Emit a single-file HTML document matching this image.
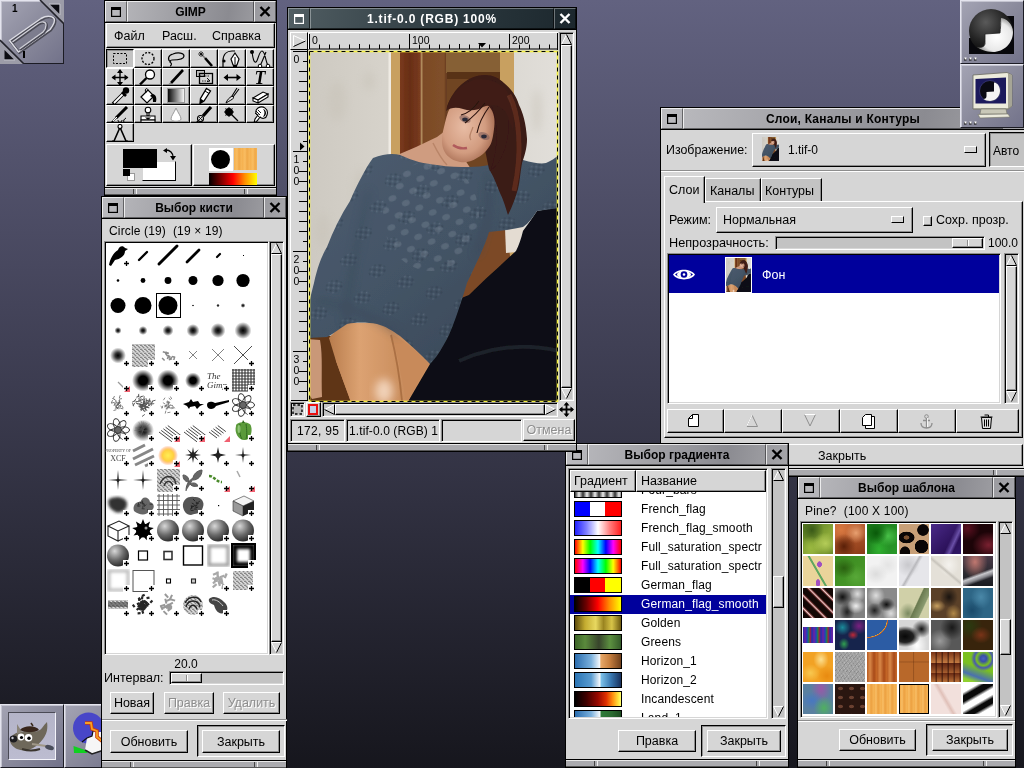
<!DOCTYPE html>
<html lang="ru"><head><meta charset="utf-8"><title>GIMP desktop</title>
<style>
*{box-sizing:border-box}
html,body{margin:0;padding:0}
body{width:1024px;height:768px;overflow:hidden;position:relative;background:linear-gradient(180deg,#626280 0%,#3c3c50 50%,#16161d 100%);font-family:"Liberation Sans",sans-serif;font-size:12px;color:#000;line-height:1}
.a{position:absolute}
.win{position:absolute;background:#000;overflow:hidden;will-change:transform}
.tb{position:absolute;left:1px;top:1px;right:1px;height:21px;background:linear-gradient(100deg,#bcbcc0 0%,#8b8b91 72%,#a6a6aa 100%)}
.tb.f{background:linear-gradient(100deg,#515e63 0%,#2a373d 60%,#1c272d 100%)}
.tb i{position:absolute;top:0;bottom:0;border-top:1px solid rgba(255,255,255,.75);border-left:1px solid rgba(255,255,255,.75);border-bottom:1px solid rgba(0,0,0,.45);border-right:1px solid rgba(0,0,0,.45)}
.tb.f i{border-top-color:rgba(255,255,255,.35);border-left-color:rgba(255,255,255,.35);border-bottom-color:rgba(0,0,0,.6);border-right-color:rgba(0,0,0,.6)}
.tb .l{left:0;width:22px}
.tb .m{left:22px;right:22px}
.tb .r{right:0;width:22px}
.tb b{position:absolute;left:22px;right:22px;top:5px;text-align:center;font-size:12px;font-weight:bold;letter-spacing:0;white-space:nowrap}
.tb.f b{color:#fff}
.tb svg{position:absolute;top:5px}
.ct{position:absolute;left:1px;right:1px;top:23px;background:#d6d6d6}
.rb{position:absolute;left:1px;right:1px;height:7px;background:#aaaaae;border-top:1px solid #e8e8e8;border-bottom:1px solid #555}
.rb:before,.rb:after{content:"";position:absolute;top:0;bottom:0;width:2px;border-left:1px solid #444;border-right:1px solid #eee}
.rb:before{left:28px}.rb:after{right:28px}
.btn{position:absolute;background:#d6d6d6;border:1px solid;border-color:#fff #000 #000 #fff;box-shadow:inset -1px -1px 0 #8e8e8e;text-align:center;white-space:nowrap}
.btn.dis{color:#8e8e8e;text-shadow:1px 1px 0 #fff}
.in{position:absolute;border:1px solid;border-color:#8e8e8e #fff #fff #8e8e8e;box-shadow:inset 1px 1px 0 #000,inset -1px -1px 0 #d6d6d6}
.sb{position:absolute;background:#c3c3c3;border:1px solid;border-color:#8e8e8e #fff #fff #8e8e8e;box-shadow:inset 1px 1px 0 #000,inset -1px -1px 0 #d6d6d6}
.t{position:absolute;white-space:nowrap}
.dock{will-change:transform;position:absolute;width:64px;height:64px;background:linear-gradient(135deg,#a4a4b4 0%,#8a8a9c 50%,#72728a 100%);border:1px solid;border-color:#e4e4ee #1c1c24 #1c1c24 #e4e4ee;box-shadow:inset 1px 1px 0 #c4c4d0}
</style></head><body>
<div class="dock" style="left:0;top:0">
<svg class="a" style="left:-1px;top:-1px" width="64" height="64" viewBox="0 0 64 64">
<path d="M40 0L64 0L64 24Z" fill="#9c9ca8"/><path d="M50 4.500L59.500 4.500L59.500 14Z" fill="#0c0c12"/><path d="M60 4V15M49 4H60" stroke="#d0d0d8" stroke-width="1" fill="none" opacity=".7"/>
<path d="M0 40L0 64L24 64Z" fill="#9c9ca8"/><path d="M4.500 50L4.500 59.500L14 59.500Z" fill="#0c0c12"/><path d="M4 60H15" stroke="#d0d0d8" stroke-width="1" opacity=".7"/>
<path d="M40 0L64 24" stroke="#22222a" stroke-width="1.600"/><path d="M0 40L24 64" stroke="#22222a" stroke-width="1.600"/>
<path d="M9.500 40.500L41 18.500C46 15.500 52 15.500 54 18.500C55.500 21 53 25.500 50 29.500L18.500 52Z" fill="#54545e" opacity=".22"/>
<g fill="none" stroke-linecap="round" stroke-linejoin="round">
<path d="M9.500 40.500L41 18.500C46 15.500 52 15.500 54 18.500C55.500 21 53 25.500 50 29.500L18.500 52L9.500 40.500" stroke="#4a4a55" stroke-width="2.600" transform="translate(.8,.8)"/>
<path d="M9.500 40.500L41 18.500C46 15.500 52 15.500 54 18.500C55.500 21 53 25.500 50 29.500L18.500 52L9.500 40.500" stroke="#dcdce4" stroke-width="1.500"/>
<path d="M13 41.500L38 23.500C42 21 46 21.500 46 25C46 28 45 30 43 32L20 48.500" stroke="#4a4a55" stroke-width="2.400" transform="translate(.8,.8)"/>
<path d="M13 41.500L38 23.500C42 21 46 21.500 46 25C46 28 45 30 43 32L20 48.500" stroke="#d0d0d8" stroke-width="1.300"/>
</g>
<text x="12" y="11.500" font-family="Liberation Sans, sans-serif" font-weight="bold" font-size="10" fill="#000">1</text>
<rect x="23" y="51" width="2" height="7" fill="#000"/>
</svg></div>
<div class="dock" style="left:960px;top:0;z-index:10">
<svg class="a" style="left:-1px;top:-1px" width="64" height="64" viewBox="0 0 64 64">
<defs><radialGradient id="gs1" cx="38%" cy="30%" r="70%"><stop offset="0" stop-color="#5a5a5a"/><stop offset=".6" stop-color="#262626"/><stop offset="1" stop-color="#0a0a0a"/></radialGradient>
<radialGradient id="gs2" cx="55%" cy="55%" r="60%"><stop offset="0" stop-color="#fff"/><stop offset=".7" stop-color="#e8e8e8"/><stop offset="1" stop-color="#8a8a8a"/></radialGradient></defs>
<rect x="36" y="16" width="18" height="38" fill="#08080c"/><rect x="9" y="38" width="45" height="16" fill="#08080c"/>
<circle cx="31" cy="31" r="22" fill="url(#gs1)"/>
<path d="M40.500 18C46 18 53 24 53 32C53 43 44 52 33 52C26 52 20 49 17 47C22 48 25 47 25 42L25 34L40 33Z" fill="url(#gs2)"/>
<path d="M40.500 18C41 24 40.500 28 40 33L25 34C25 38 25 42 25 44C24 47 21 48 17 47" fill="none" stroke="#222" stroke-width=".8"/>
<g><rect x="4" y="58" width="2.500" height="2.500" fill="#111"/><rect x="9" y="58" width="2.500" height="2.500" fill="#111"/><rect x="14" y="58" width="2.500" height="2.500" fill="#111"/><rect x="4.500" y="57.500" width="2" height="2" fill="#fff"/><rect x="9.500" y="57.500" width="2" height="2" fill="#fff"/><rect x="14.500" y="57.500" width="2" height="2" fill="#fff"/></g>
</svg></div>
<div class="dock" style="left:960px;top:64px;z-index:10">
<svg class="a" style="left:-1px;top:-1px" width="64" height="64" viewBox="0 0 64 64">
<path d="M13 11L47 8.500L52 11L52 42L48 45L13 45Z" fill="#ecebdc" stroke="#6a6a60" stroke-width=".8"/>
<path d="M48 9.500L52 11L52 42L48 45Z" fill="#a6a596"/>
<path d="M13 45L48 45L52 42" fill="none" stroke="#8a8a7c" stroke-width="1"/>
<path d="M15.500 15L46 13.500L46 39.500L15.500 39.500Z" fill="#1c1a5c"/>
<circle cx="30" cy="27" r="10.500" fill="#0a0a14" stroke="#3a3a7a" stroke-width=".8"/>
<path d="M34 18.500C38 19 40 23 40 27C40 33 35 37 30 37C27 37 25 36 23.500 35C25.500 35 26.500 34 26.500 32L26.500 28L34 27.500Z" fill="#f4f4f4"/>
<path d="M21 45L46 45L47 50L20 50Z" fill="#c9c8b8" stroke="#77776a" stroke-width=".6"/>
<path d="M18 50.500L48 50L50 53L20 54Z" fill="#ecebdc" stroke="#77776a" stroke-width=".6"/>
<g><rect x="4" y="58" width="2.500" height="2.500" fill="#111"/><rect x="9" y="58" width="2.500" height="2.500" fill="#111"/><rect x="14" y="58" width="2.500" height="2.500" fill="#111"/><rect x="4.500" y="57.500" width="2" height="2" fill="#fff"/><rect x="9.500" y="57.500" width="2" height="2" fill="#fff"/><rect x="14.500" y="57.500" width="2" height="2" fill="#fff"/></g>
</svg></div>
<div class="dock" style="left:0;top:704px">
<div class="a" style="left:7px;top:7px;width:48px;height:48px;background:linear-gradient(180deg,#b4b4c8,#bcbcd0);border:1px solid;border-color:#4a4a55 #f4f4fa #f4f4fa #4a4a55"></div>
<svg class="a" style="left:-1px;top:-1px" width="64" height="64" viewBox="0 0 64 64">
<defs><filter id="wb"><feGaussianBlur stdDeviation=".6"/></filter></defs>
<g filter="url(#wb)">
<path d="M13 31C17 27 24 27 30 28C35 28 40 27 42 24C44 21 46 19 47 18C48 24 47 30 43 35C40 39 37 42 33 44C28 47 22 47 17 45C13 43 10 40 10 36C10 34 11 32 13 31Z" fill="#6e685a"/>
<path d="M17 20L22 28L17 30Z" fill="#8a8478"/>
<path d="M20 26C24 21 36 21 39 26C34 29 25 29 20 26Z" fill="#38281a"/><path d="M31 19L33 22" stroke="#38281a" stroke-width="1.500"/>
<path d="M22 45C28 47 34 47 40 45" stroke="#3a362e" stroke-width="2" fill="none"/>
<ellipse cx="13.500" cy="35" rx="3.800" ry="3.400" fill="#1a1a1e"/><circle cx="12.500" cy="34" r="1.200" fill="#c8c8d0"/>
<circle cx="21" cy="33" r="3.400" fill="#fff"/><circle cx="28.500" cy="33.800" r="3.800" fill="#fff"/>
<circle cx="21.500" cy="33.500" r="1.600" fill="#000"/><circle cx="29" cy="34.200" r="1.700" fill="#000"/>
<path d="M32 40L46 42" stroke="#a09888" stroke-width="2"/><ellipse cx="49.500" cy="43.500" rx="4.500" ry="2.400" fill="#4a4e5a" transform="rotate(15 49.500 43.500)"/>
</g></svg></div>
<div class="dock" style="left:64px;top:704px">
<svg class="a" style="left:-1px;top:-1px" width="64" height="64" viewBox="0 0 64 64">
<circle cx="24.500" cy="24" r="15.500" fill="#4846c8"/>
<path d="M23 34L28 32L29 28L38 28L38 46L28 50L21 46Z" fill="#f6f6f6"/>
<path d="M18 38L23 34L28 32L29 27" stroke="#111" stroke-width="1.200" fill="none"/>
<path d="M21 19L27 19L28 25L33 27L33 33L38 37" fill="none" stroke="#c83a10" stroke-width="3.600"/>
<path d="M21 19L27 19L28 25L33 27L33 33L38 37" fill="none" stroke="#f8a020" stroke-width="1.800"/>
<path d="M9.500 42L24 47L23 49L10 49Z" fill="#10d020"/>
<path d="M21 46L28 50L37 47" stroke="#222" stroke-width="1.500" fill="none"/>
</svg></div>
<div class="win" style="left:104px;top:0px;width:173px;height:196px;z-index:0"><div class="tb"><i class="l"></i><i class="m"></i><i class="r"></i><svg style="left:6px;top:6px" width="10" height="10" viewBox="0 0 10 10"><rect x="0.600" y="0.600" width="8.800" height="8.800" fill="none" stroke="#000" stroke-width="1.200"/><rect x="0" y="0" width="10" height="3" fill="#000"/></svg><svg style="right:5px" width="12" height="11" viewBox="0 0 12 11"><path d="M1.5 1L10.5 10M10.5 1L1.5 10" stroke="#000" stroke-width="2.4"/></svg><b style="letter-spacing:0px">GIMP</b></div><div class="ct" style="height:164px"><div class="btn" style="left:1px;top:0px;width:169px;height:25px"></div><span class="t" style="left:9px;top:7px;font-size:12.5px;">Файл</span><span class="t" style="left:57px;top:7px;font-size:12.5px;">Расш.</span><span class="t" style="left:107px;top:7px;font-size:12.5px;">Справка</span><div class="btn" style="left:1px;top:26px;width:28px;height:19px;background:#c3c3c3;border-color:#000 #fff #fff #000;box-shadow:inset 1px 1px 0 #8e8e8e;overflow:hidden"><svg class="a" style="left:-1px;top:-1px" width="28" height="19" viewBox="0 0 28 19"><rect x="7.5" y="4.5" width="13" height="10" fill="none" stroke="#000" stroke-dasharray="2 1.5"/></svg></div><div class="btn" style="left:29px;top:26px;width:28px;height:19px;;overflow:hidden"><svg class="a" style="left:-1px;top:-1px" width="28" height="19" viewBox="0 0 28 19"><ellipse cx="14" cy="9.5" rx="6" ry="6" fill="none" stroke="#000" stroke-width="1.300" stroke-dasharray="2 1.5"/></svg></div><div class="btn" style="left:57px;top:26px;width:28px;height:19px;;overflow:hidden"><svg class="a" style="left:-1px;top:-1px" width="28" height="19" viewBox="0 0 28 19"><path d="M9 13C5 11 6 6 11 5C16 3 22 4 22 7C22 10 15 11 10 11C8 11 7 13 9 14C10 15 9 17 8 17" fill="none" stroke="#000" stroke-width="1.2"/></svg></div><div class="btn" style="left:85px;top:26px;width:28px;height:19px;;overflow:hidden"><svg class="a" style="left:-1px;top:-1px" width="28" height="19" viewBox="0 0 28 19"><path d="M15 9L22 17" stroke="#000" stroke-width="2.6"/><path d="M11 5L15 9" stroke="#777" stroke-width="1.6"/><path d="M8 5H14M11 2V8M9 3L13 7M13 3L9 7" stroke="#000" stroke-width=".7"/></svg></div><div class="btn" style="left:113px;top:26px;width:28px;height:19px;;overflow:hidden"><svg class="a" style="left:-1px;top:-1px" width="28" height="19" viewBox="0 0 28 19"><path d="M5 18V12C5 5 9 2 14 2H17" fill="none" stroke="#000" stroke-width="1.2"/><circle cx="6" cy="12" r="1.6"/><path d="M17 4L21 10L19 16H15L13 10Z" fill="#fff" stroke="#000" stroke-width="1.2"/><path d="M17 8V15" stroke="#000"/><rect x="15" y="16" width="4" height="3" fill="#000"/></svg></div><div class="btn" style="left:141px;top:26px;width:28px;height:19px;;overflow:hidden"><svg class="a" style="left:-1px;top:-1px" width="28" height="19" viewBox="0 0 28 19"><circle cx="6" cy="3" r="2"/><path d="M6 3C7 10 8 14 10 13C12 12 13 2 16 2C19 2 19 10 22 17M20 3C18 8 16 13 14 17" fill="none" stroke="#000" stroke-width="1.1"/><circle cx="14" cy="17" r="1.8" fill="#fff" stroke="#000"/><circle cx="22" cy="17" r="1.8" fill="#fff" stroke="#000"/></svg></div><div class="btn" style="left:1px;top:45px;width:28px;height:18px;;overflow:hidden"><svg class="a" style="left:-1px;top:-1px" width="28" height="19" viewBox="0 0 28 19"><path d="M14 2V17M6.5 9.5H21.5" stroke="#000" stroke-width="1.4"/><path d="M14 1L11 5H17ZM14 18L11 14H17ZM5.500 9.5L9.500 6.500V12.500ZM22.500 9.500L18.500 6.500V12.500Z" fill="#000"/></svg></div><div class="btn" style="left:29px;top:45px;width:28px;height:18px;;overflow:hidden"><svg class="a" style="left:-1px;top:-1px" width="28" height="19" viewBox="0 0 28 19"><circle cx="16" cy="6.500" r="4.500" fill="#fff" stroke="#000" stroke-width="1.300"/><path d="M12.500 10L6 16.500" stroke="#000" stroke-width="2.400"/></svg></div><div class="btn" style="left:57px;top:45px;width:28px;height:18px;;overflow:hidden"><svg class="a" style="left:-1px;top:-1px" width="28" height="19" viewBox="0 0 28 19"><path d="M21 2L9 15" stroke="#000" stroke-width="2.600"/><path d="M9 15L6 18" stroke="#888" stroke-width="2"/></svg></div><div class="btn" style="left:85px;top:45px;width:28px;height:18px;;overflow:hidden"><svg class="a" style="left:-1px;top:-1px" width="28" height="19" viewBox="0 0 28 19"><rect x="6.500" y="2.500" width="8" height="6" fill="#bbb" stroke="#000"/><rect x="9.500" y="5.500" width="13" height="10" fill="none" stroke="#000" stroke-width="1.300"/><path d="M10 8H20M12 13H19" stroke="#000" stroke-dasharray="1.500 1" stroke-width=".8"/><path d="M17 10L20 13L17 13.500" fill="none" stroke="#000" stroke-width=".9"/></svg></div><div class="btn" style="left:113px;top:45px;width:28px;height:18px;;overflow:hidden"><svg class="a" style="left:-1px;top:-1px" width="28" height="19" viewBox="0 0 28 19"><path d="M8 9.500H21" stroke="#000" stroke-width="1.600"/><path d="M5.500 9.500L10 6V13ZM23 9.500L18.500 6V13Z" fill="#000"/></svg></div><div class="btn" style="left:141px;top:45px;width:28px;height:18px;;overflow:hidden"><svg class="a" style="left:-1px;top:-1px" width="28" height="19" viewBox="0 0 28 19"><text x="14" y="16" text-anchor="middle" font-family="Liberation Serif, serif" font-weight="bold" font-style="italic" font-size="18" fill="#000">T</text></svg></div><div class="btn" style="left:1px;top:63px;width:28px;height:19px;;overflow:hidden"><svg class="a" style="left:-1px;top:-1px" width="28" height="19" viewBox="0 0 28 19"><circle cx="20" cy="4.500" r="3.200"/><path d="M16 6L20 10" stroke="#000" stroke-width="2.600"/><path d="M17 8L7 18" stroke="#000" stroke-width="3.800"/><path d="M16.500 8.500L8 17" stroke="#fff" stroke-width="1.800"/></svg></div><div class="btn" style="left:29px;top:63px;width:28px;height:19px;;overflow:hidden"><svg class="a" style="left:-1px;top:-1px" width="28" height="19" viewBox="0 0 28 19"><path d="M7 11L14 4L20 10L13 17Z" fill="#fff" stroke="#000" stroke-width="1.200"/><path d="M12 7C10 3 13 1 14 4" fill="none" stroke="#000" stroke-width="1"/><path d="M18 8C22 8 23 12 22 16L19 16C19 13 19 11 16 10Z" fill="#000"/></svg></div><div class="btn" style="left:57px;top:63px;width:28px;height:19px;;overflow:hidden"><svg class="a" style="left:-1px;top:-1px" width="28" height="19" viewBox="0 0 28 19"><defs><linearGradient id="tg" x1="0" x2="1"><stop offset="0" stop-color="#000"/><stop offset="1" stop-color="#fff"/></linearGradient></defs><rect x="5.500" y="2.500" width="17" height="14" fill="url(#tg)" stroke="#999" stroke-width="1"/></svg></div><div class="btn" style="left:85px;top:63px;width:28px;height:19px;;overflow:hidden"><svg class="a" style="left:-1px;top:-1px" width="28" height="19" viewBox="0 0 28 19"><path d="M16.500 2.500L20.500 5L14 15L10 17.500L10.500 12.500Z" fill="#fff" stroke="#000" stroke-width="1.300"/><path d="M10.500 12.500L10 17.500L14 15Z" fill="#000"/><path d="M15 5L19 7.500" stroke="#000" stroke-width="1"/></svg></div><div class="btn" style="left:113px;top:63px;width:28px;height:19px;;overflow:hidden"><svg class="a" style="left:-1px;top:-1px" width="28" height="19" viewBox="0 0 28 19"><path d="M19 2L14 10M21 3L15 11" stroke="#000" stroke-width="1.100"/><path d="M14 10L16 11.500C14 14 11 15 8 17C9 14 11 12 14 10Z" fill="#ddd" stroke="#000" stroke-width="1"/></svg></div><div class="btn" style="left:141px;top:63px;width:28px;height:19px;;overflow:hidden"><svg class="a" style="left:-1px;top:-1px" width="28" height="19" viewBox="0 0 28 19"><path d="M7 12L17 6L22 8L12 14Z" fill="#fff" stroke="#000" stroke-width="1.100"/><path d="M7 12V15L12 17V14ZM12 14V17L22 11V8Z" fill="#fff" stroke="#000" stroke-width="1.100"/></svg></div><div class="btn" style="left:1px;top:82px;width:28px;height:18px;;overflow:hidden"><svg class="a" style="left:-1px;top:-1px" width="28" height="19" viewBox="0 0 28 19"><path d="M21 2L10 13" stroke="#000" stroke-width="3"/><path d="M10 13L5 18" stroke="#000" stroke-width="1.400"/><path d="M11 12L7 16" stroke="#fff" stroke-width="1"/><path d="M12 15C12 18 16 18 16 15M20 13C18 14 17 16 18 17" fill="none" stroke="#000" stroke-width="1"/></svg></div><div class="btn" style="left:29px;top:82px;width:28px;height:18px;;overflow:hidden"><svg class="a" style="left:-1px;top:-1px" width="28" height="19" viewBox="0 0 28 19"><circle cx="14" cy="5" r="2.800" fill="#fff" stroke="#000" stroke-width="1.100"/><path d="M13 8V11H15V8" stroke="#000" fill="none"/><path d="M7 11H21V15H7Z" fill="#fff" stroke="#000" stroke-width="1.100"/><path d="M7 15H21V18H7Z" fill="#ddd" stroke="#000" stroke-width="1.100"/><path d="M11 12.500H17L14 15Z" fill="#000"/></svg></div><div class="btn" style="left:57px;top:82px;width:28px;height:18px;;overflow:hidden"><svg class="a" style="left:-1px;top:-1px" width="28" height="19" viewBox="0 0 28 19"><path d="M14 3C16 8 19 11 19 14C19 17 9 17 9 14C9 11 12 8 14 3Z" fill="#fff" stroke="#999" stroke-width="1"/></svg></div><div class="btn" style="left:85px;top:82px;width:28px;height:18px;;overflow:hidden"><svg class="a" style="left:-1px;top:-1px" width="28" height="19" viewBox="0 0 28 19"><path d="M21 2L13 11" stroke="#000" stroke-width="3.200"/><circle cx="10.500" cy="13.500" r="3" fill="#ddd" stroke="#000" stroke-width="1.100"/><path d="M8.500 11.500L12.500 15.500M12.500 11.500L8.500 15.500" stroke="#000" stroke-width=".8"/><path d="M8 16L6 18" stroke="#000" stroke-width="1.200"/></svg></div><div class="btn" style="left:113px;top:82px;width:28px;height:18px;;overflow:hidden"><svg class="a" style="left:-1px;top:-1px" width="28" height="19" viewBox="0 0 28 19"><circle cx="11" cy="7" r="4" fill="#000"/><path d="M11 7L20 16" stroke="#000" stroke-width="1.300"/><path d="M6 7H16M11 2V12M7.500 3.500L14.500 10.500M14.500 3.500L7.500 10.500" stroke="#000" stroke-width="1"/></svg></div><div class="btn" style="left:141px;top:82px;width:28px;height:18px;;overflow:hidden"><svg class="a" style="left:-1px;top:-1px" width="28" height="19" viewBox="0 0 28 19"><path d="M12 3C17 0 23 4 21 10C20 14 16 14 14 12L11 16L8 18L9 14L12 10C9 9 9 5 12 3Z" fill="#fff" stroke="#000" stroke-width="1.100"/><path d="M17 4C21 5 21 11 17 12C19 9 19 6 17 4Z" fill="#000"/><path d="M9 8L13 12M10 6L14 10M12 5L15 8" stroke="#000" stroke-width=".9"/></svg></div><div class="btn" style="left:1px;top:100px;width:28px;height:19px;;overflow:hidden"><svg class="a" style="left:-1px;top:-1px" width="28" height="19" viewBox="0 0 28 19"><circle cx="14" cy="3.500" r="2" fill="#fff" stroke="#000" stroke-width="1.100"/><path d="M13.500 5.500L8 18M14.500 5.500L20 18" stroke="#000" stroke-width="1.600"/><path d="M8 18H6M20 18H22" stroke="#000"/></svg></div><div class="btn" style="left:1px;top:121px;width:86px;height:42px"></div><div class="btn" style="left:88px;top:121px;width:82px;height:42px"></div><div class="a" style="left:37px;top:138px;width:34px;height:20px;background:#fff;border:1px solid;border-color:#d6d6d6 #000 #000 #d6d6d6"></div><div class="a" style="left:18px;top:126px;width:34px;height:19px;background:#000"></div><div class="a" style="left:22px;top:150px;width:8px;height:8px;background:#fff;border:1px solid #999"></div><div class="a" style="left:18px;top:146px;width:7px;height:7px;background:#000"></div><svg class="a" style="left:58px;top:125px" width="14" height="13" viewBox="0 0 14 13"><path d="M3 2C7 2 10 5 10 9" fill="none" stroke="#000" stroke-width="1.300"/><path d="M0 2.500L4 0V5ZM10 12.500L7 8H13Z" fill="#000"/></svg><div class="a" style="left:104px;top:125px;width:24px;height:23px;background:#fff"></div><div class="a" style="left:106px;top:127px;width:19px;height:19px;border-radius:50%;background:#000"></div><div class="a" style="left:129px;top:125px;width:23px;height:22px;background:repeating-linear-gradient(90deg,#f5b04e 0,#f9bd62 3px,#efa848 5px,#f7b85a 8px)"></div><div class="a" style="left:104px;top:150px;width:48px;height:12px;background:linear-gradient(90deg,#000 0%,#7a0000 25%,#ff0000 50%,#ff9000 75%,#ffff00 100%)"></div></div><div class="rb" style="top:188px"></div></div>
<div class="win" style="left:101px;top:196px;width:186px;height:574px;z-index:0"><div class="tb"><i class="l"></i><i class="m"></i><i class="r"></i><svg style="left:6px;top:6px" width="10" height="10" viewBox="0 0 10 10"><rect x="0.600" y="0.600" width="8.800" height="8.800" fill="none" stroke="#000" stroke-width="1.200"/><rect x="0" y="0" width="10" height="3" fill="#000"/></svg><svg style="right:5px" width="12" height="11" viewBox="0 0 12 11"><path d="M1.5 1L10.5 10M10.5 1L1.5 10" stroke="#000" stroke-width="2.4"/></svg><b style="letter-spacing:0px">Выбор кисти</b></div><div class="ct" style="height:541px"><span class="t" style="left:7px;top:6px;font-size:12px;letter-spacing:.15px">Circle (19)&nbsp; (19 × 19)</span><div class="in" style="left:2px;top:22px;width:165px;height:414px;background:#fff;overflow:hidden"><svg class="a" style="left:0px;top:-1px" width="161" height="411" viewBox="0 0 161 411"><defs>
<radialGradient id="fz"><stop offset="0" stop-color="#000"/><stop offset=".35" stop-color="#000" stop-opacity=".8"/><stop offset="1" stop-color="#000" stop-opacity="0"/></radialGradient>
<radialGradient id="fzh"><stop offset="0" stop-color="#000"/><stop offset=".4" stop-color="#000"/><stop offset="1" stop-color="#000" stop-opacity="0"/></radialGradient>
<radialGradient id="sun"><stop offset="0" stop-color="#ffee55"/><stop offset=".55" stop-color="#ffd040"/><stop offset="1" stop-color="#ff7030" stop-opacity="0"/></radialGradient>
<radialGradient id="sph" cx="35%" cy="30%" r="75%"><stop offset="0" stop-color="#d8d8d8"/><stop offset=".55" stop-color="#6a6a6a"/><stop offset="1" stop-color="#262626"/></radialGradient>
<filter id="b1"><feGaussianBlur stdDeviation="0.7"/></filter>
<filter id="b2"><feGaussianBlur stdDeviation="1.6"/></filter>
<pattern id="nz" width="4" height="4" patternUnits="userSpaceOnUse"><rect width="4" height="4" fill="#bcbcbc"/><path d="M0 0L2 2M3 1L4 0M1 4L3 2" stroke="#7a7a7a" stroke-width=".8"/><path d="M2 0L4 2M0 2L2 4" stroke="#eee" stroke-width=".7"/></pattern>
</defs><path d="M4 24C5 18 8 12 13 9C14 5 18 4 20 7L23 8L20 10C20 15 15 18 10 19L6 25Z" fill="#000"/><rect x="18" y="19" width="8" height="8" fill="#fff"/><path d="M19 22.5H24M21.5 20V25" stroke="#000" stroke-width="1.3"/><path d="M34 19L42 11" stroke="#000" stroke-width="2.4" stroke-linecap="round"/><path d="M54 23L72 5" stroke="#000" stroke-width="3" stroke-linecap="round"/><path d="M82 21L94 9" stroke="#000" stroke-width="2.8" stroke-linecap="round"/><path d="M112 16L115 13" stroke="#000" stroke-width="2.2" stroke-linecap="round"/><rect x="138" y="14" width="1" height="1" fill="#000"/><circle cx="13" cy="39.5" r="1.3" fill="#000"/><circle cx="38" cy="39.5" r="2.4" fill="#000"/><circle cx="63" cy="39.5" r="3.4" fill="#000"/><circle cx="88" cy="39.5" r="4.5" fill="#000"/><circle cx="113" cy="39.5" r="5.6" fill="#000"/><circle cx="138" cy="39.5" r="6.6" fill="#000"/><circle cx="13" cy="64.5" r="7.5" fill="#000"/><circle cx="38" cy="64.5" r="8.5" fill="#000"/><circle cx="63" cy="64.5" r="9.5" fill="#000"/><rect x="51.5" y="52.5" width="24" height="24" fill="none" stroke="#000" stroke-width="1"/><circle cx="88" cy="64.5" r="1.2" fill="url(#fz)"/><circle cx="113" cy="64.5" r="1.8" fill="url(#fz)"/><circle cx="138" cy="64.5" r="2.4" fill="url(#fz)"/><circle cx="13" cy="89.5" r="3.5" fill="url(#fz)"/><circle cx="38" cy="89.5" r="4.5" fill="url(#fz)"/><circle cx="63" cy="89.5" r="5.5" fill="url(#fz)"/><circle cx="88" cy="89.5" r="6.5" fill="url(#fz)"/><circle cx="113" cy="89.5" r="7.5" fill="url(#fz)"/><circle cx="138" cy="89.5" r="8.5" fill="url(#fz)"/><circle cx="13" cy="114.5" r="8" fill="url(#fz)"/><rect x="18" y="119" width="8" height="8" fill="#fff"/><path d="M19 122.5H24M21.5 120V125" stroke="#000" stroke-width="1.3"/><rect x="27" y="103" width="23" height="23" fill="url(#nz)"/><rect x="43" y="119" width="8" height="8" fill="#fff"/><path d="M44 122.5H49M46.5 120V125" stroke="#000" stroke-width="1.3"/><g stroke="#777" stroke-width="1.5" fill="none" opacity=".85"><path d="M62.5 115.1l-2.0 -2.8"/><path d="M66.9 115.9l-2.3 2.6"/><path d="M66.8 115.4l3.4 0.8"/><path d="M62.5 114.2l2.9 1.9"/><path d="M57.1 117.0l2.5 2.5"/><path d="M63.8 118.9l3.3 -1.1"/><path d="M60.2 112.5l3.5 -0.5"/><path d="M69.6 116.0l-0.9 3.4"/><path d="M63.6 114.7l-1.3 3.3"/><path d="M63.6 112.7l-3.1 -1.7"/><path d="M61.1 111.7l-3.3 -1.0"/><path d="M63.4 114.2l1.0 3.4"/></g><rect x="68" y="119" width="8" height="8" fill="#fff"/><path d="M69 122.5H74M71.5 120V125" stroke="#000" stroke-width="1.3"/><path d="M84 110L92 118M92 110L84 118" stroke="#222" stroke-width="0.7" opacity=".8"/><path d="M107 108L119 120M119 108L107 120" stroke="#222" stroke-width="0.7" opacity=".8"/><path d="M129 105L147 123M147 105L129 123" stroke="#222" stroke-width="1" opacity=".8"/><rect x="143" y="119" width="8" height="8" fill="#fff"/><path d="M144 122.5H149M146.5 120V125" stroke="#000" stroke-width="1.3"/><path d="M13 141L19 147" stroke="#999" stroke-width="1.2"/><rect x="18" y="144" width="8" height="8" fill="#fff"/><path d="M25 145V151H19Z" fill="#f06070"/><path d="M19 147.5H24M21.5 145V150" stroke="#000" stroke-width="1.3"/><circle cx="38" cy="139.5" r="11" fill="url(#fzh)"/><rect x="43" y="144" width="8" height="8" fill="#fff"/><path d="M44 147.5H49M46.5 145V150" stroke="#000" stroke-width="1.3"/><circle cx="63" cy="139.5" r="11" fill="url(#fzh)"/><rect x="68" y="144" width="8" height="8" fill="#fff"/><path d="M69 147.5H74M71.5 145V150" stroke="#000" stroke-width="1.3"/><circle cx="88" cy="139.5" r="8" fill="url(#fzh)"/><rect x="93" y="144" width="8" height="8" fill="#fff"/><path d="M94 147.5H99M96.5 145V150" stroke="#000" stroke-width="1.3"/><text x="102" y="138" font-family="Liberation Serif, serif" font-style="italic" font-size="9" fill="#333">The</text><text x="102" y="147" font-family="Liberation Serif, serif" font-style="italic" font-size="9" fill="#333">Gimp</text><rect x="118" y="144" width="8" height="8" fill="#fff"/><path d="M119 147.5H124M121.5 145V150" stroke="#000" stroke-width="1.3"/><g stroke="#333" stroke-width="1.1"><path d="M128 128V150M127 129H150"/><path d="M131 128V150M127 132H150"/><path d="M134 128V150M127 135H150"/><path d="M137 128V150M127 138H150"/><path d="M140 128V150M127 141H150"/><path d="M143 128V150M127 144H150"/><path d="M146 128V150M127 147H150"/><path d="M149 128V150M127 150H150"/></g><rect x="143" y="144" width="8" height="8" fill="#fff"/><path d="M144 147.5H149M146.5 145V150" stroke="#000" stroke-width="1.3"/><g stroke="#444" stroke-width="0.8" fill="none" opacity=".85"><path d="M11.5 160.9l-1.2 2.8"/><path d="M9.9 162.1l-0.9 2.9"/><path d="M14.5 158.6l0.1 3.0"/><path d="M9.2 162.1l2.1 -2.1"/><path d="M12.7 161.7l3.0 -0.4"/><path d="M15.5 166.3l0.1 -3.0"/><path d="M15.3 167.2l2.9 0.7"/><path d="M10.0 158.7l-2.7 -1.3"/><path d="M14.8 162.2l-1.0 -2.8"/><path d="M9.1 161.4l-2.9 0.8"/><path d="M17.0 157.6l-3.0 0.5"/><path d="M12.7 163.6l-0.9 -2.9"/><path d="M8.2 157.7l1.3 -2.7"/><path d="M12.3 167.0l-1.5 -2.6"/><path d="M16.7 164.5l1.5 2.6"/><path d="M13.3 164.3l0.3 -3.0"/><path d="M14.4 165.4l-2.3 1.9"/><path d="M13.4 163.5l-2.8 0.9"/><path d="M6.3 161.9l1.3 -2.7"/><path d="M14.5 162.3l-2.6 1.5"/><path d="M8.5 169.5l2.9 -0.8"/><path d="M13.8 165.1l0.3 3.0"/><path d="M13.4 167.9l-2.5 -1.6"/><path d="M13.0 164.0l-2.6 1.5"/><path d="M9.9 167.3l2.9 -0.9"/><path d="M11.5 160.2l-2.2 -2.0"/><path d="M12.8 163.6l2.4 -1.8"/><path d="M14.3 157.1l0.9 -2.9"/><path d="M10.5 166.0l2.4 1.8"/><path d="M12.7 163.6l2.7 1.2"/></g><rect x="18" y="169" width="8" height="8" fill="#fff"/><path d="M19 172.5H24M21.5 170V175" stroke="#000" stroke-width="1.3"/><g stroke="#333" stroke-width="0.9" fill="none" opacity=".85"><path d="M38.4 165.6l-1.9 3.0"/><path d="M38.0 164.0l2.0 2.8"/><path d="M40.9 166.2l3.5 0.6"/><path d="M42.3 159.6l2.1 2.8"/><path d="M38.0 167.5l-2.3 2.6"/><path d="M44.1 169.9l3.5 -0.2"/><path d="M33.3 165.0l3.0 1.8"/><path d="M40.7 166.1l-0.3 3.5"/><path d="M38.8 162.6l3.5 0.5"/><path d="M43.0 162.4l2.1 2.8"/><path d="M37.7 163.9l-3.4 -0.6"/><path d="M46.6 162.8l-1.2 -3.3"/><path d="M37.7 167.7l1.7 3.0"/><path d="M38.7 158.7l0.6 -3.4"/><path d="M36.9 166.0l1.3 -3.2"/><path d="M46.5 163.2l1.2 -3.3"/><path d="M41.1 157.3l0.5 3.5"/><path d="M34.5 163.6l3.4 0.6"/><path d="M40.8 164.5l-0.2 3.5"/><path d="M34.6 155.1l-3.3 1.1"/><path d="M47.1 160.2l3.4 -1.0"/><path d="M36.5 165.7l0.5 3.5"/><path d="M38.7 165.9l-2.5 -2.5"/><path d="M44.8 159.1l-3.5 0.5"/><path d="M33.4 157.5l3.0 1.8"/><path d="M33.1 156.3l0.7 -3.4"/><path d="M38.0 159.2l1.5 3.2"/><path d="M38.8 160.8l1.1 -3.3"/><path d="M41.9 163.3l-2.8 2.0"/><path d="M44.8 161.6l1.7 3.1"/><path d="M39.1 165.1l2.9 -2.0"/><path d="M38.5 162.6l1.6 -3.1"/><path d="M44.5 163.2l-2.1 2.8"/><path d="M36.8 163.6l3.5 0.3"/><path d="M44.4 162.8l-3.5 -0.6"/><path d="M42.0 162.2l2.4 -2.5"/><path d="M39.0 162.1l-0.0 3.5"/><path d="M37.4 166.3l-3.0 -1.8"/><path d="M37.8 168.2l2.4 2.6"/><path d="M41.0 162.1l-3.4 0.9"/><path d="M30.2 159.5l-3.1 1.7"/><path d="M42.4 161.5l-3.4 -0.7"/><path d="M37.8 164.0l-3.3 1.3"/><path d="M38.0 164.0l1.1 -3.3"/><path d="M40.2 168.2l-0.6 -3.5"/><path d="M34.9 162.9l-3.5 -0.4"/><path d="M30.6 161.3l2.8 2.2"/><path d="M35.7 163.1l-0.6 3.5"/><path d="M38.7 159.0l-3.2 -1.3"/><path d="M38.6 154.9l-3.3 1.2"/><path d="M34.1 160.7l-3.5 -0.3"/><path d="M36.4 159.8l-3.4 -0.7"/><path d="M28.7 165.3l-1.1 -3.3"/><path d="M44.7 157.4l-0.2 3.5"/><path d="M29.2 160.6l1.9 -3.0"/><path d="M38.8 164.9l-3.3 1.2"/><path d="M40.2 165.1l3.1 1.6"/><path d="M34.2 157.2l2.8 -2.1"/><path d="M42.0 169.9l-1.9 -3.0"/><path d="M43.5 170.9l3.4 -0.7"/><path d="M39.8 173.4l-2.8 2.1"/><path d="M28.1 164.8l1.7 -3.0"/><path d="M40.3 167.7l-3.5 -0.3"/><path d="M37.0 165.7l-1.5 3.2"/><path d="M38.0 163.8l-3.3 -1.2"/><path d="M37.8 164.1l-1.7 3.1"/><path d="M34.3 160.4l3.2 1.4"/><path d="M45.8 163.2l3.4 -0.6"/><path d="M40.1 165.6l3.4 0.9"/><path d="M38.5 161.3l2.4 2.5"/></g><rect x="43" y="169" width="8" height="8" fill="#fff"/><path d="M44 172.5H49M46.5 170V175" stroke="#000" stroke-width="1.3"/><g stroke="#555" stroke-width="0.8" fill="none" opacity=".85"><path d="M56.6 167.4l1.3 -2.7"/><path d="M62.9 165.2l2.6 -1.5"/><path d="M57.9 161.6l2.5 1.6"/><path d="M68.2 165.9l-2.7 1.4"/><path d="M69.7 167.3l-2.0 -2.2"/><path d="M63.2 163.4l1.9 -2.4"/><path d="M69.3 166.8l-2.9 0.9"/><path d="M60.7 167.8l2.7 -1.3"/><path d="M62.9 165.0l-3.0 -0.5"/><path d="M63.1 164.9l1.6 2.5"/><path d="M64.5 164.5l-1.1 2.8"/><path d="M60.9 169.7l-0.7 2.9"/><path d="M61.6 164.0l-1.7 2.5"/><path d="M65.0 164.2l3.0 0.3"/><path d="M62.5 159.6l1.1 2.8"/><path d="M55.6 165.2l2.4 1.9"/><path d="M64.4 160.9l-3.0 0.1"/><path d="M64.6 161.3l-3.0 -0.1"/><path d="M60.0 156.7l-1.6 2.5"/><path d="M65.8 159.1l-2.0 -2.3"/><path d="M60.7 165.6l2.8 1.0"/><path d="M63.4 164.4l-0.2 -3.0"/><path d="M63.0 165.3l2.6 1.5"/><path d="M66.8 158.1l-1.4 -2.6"/><path d="M62.6 165.9l-0.8 2.9"/><path d="M61.8 164.3l-2.8 1.0"/><path d="M62.4 171.7l3.0 -0.5"/><path d="M61.1 163.4l2.9 -0.7"/></g><rect x="68" y="169" width="8" height="8" fill="#fff"/><path d="M69 172.5H74M71.5 170V175" stroke="#000" stroke-width="1.3"/><path d="M78 163L84 161L86 158L88 161L93 160L95 163L99 163L95 165L92 168L90 165L85 166L84 168L82 165Z" fill="#000"/><rect x="93" y="169" width="8" height="8" fill="#fff"/><path d="M94 172.5H99M96.5 170V175" stroke="#000" stroke-width="1.3"/><path d="M102 164C102 160 107 160 110 162L124 159L124 161L111 165C109 169 102 169 102 164Z" fill="#000"/><rect x="118" y="169" width="8" height="8" fill="#fff"/><path d="M119 172.5H124M121.5 170V175" stroke="#000" stroke-width="1.3"/><g fill="none" stroke="#333" stroke-width="1"><ellipse cx="144.0" cy="164.0" rx="5.5" ry="3.2" transform="rotate(0 144.0 164.0)"/><ellipse cx="141.7" cy="168.7" rx="5.5" ry="3.2" transform="rotate(51 141.7 168.7)"/><ellipse cx="136.7" cy="169.8" rx="5.5" ry="3.2" transform="rotate(103 136.7 169.8)"/><ellipse cx="132.6" cy="166.6" rx="5.5" ry="3.2" transform="rotate(154 132.6 166.6)"/><ellipse cx="132.6" cy="161.4" rx="5.5" ry="3.2" transform="rotate(206 132.6 161.4)"/><ellipse cx="136.7" cy="158.2" rx="5.5" ry="3.2" transform="rotate(257 136.7 158.2)"/><ellipse cx="141.7" cy="159.3" rx="5.5" ry="3.2" transform="rotate(309 141.7 159.3)"/><circle cx="138" cy="164" r="3.5" fill="#666"/></g><rect x="143" y="169" width="8" height="8" fill="#fff"/><path d="M144 172.5H149M146.5 170V175" stroke="#000" stroke-width="1.3"/><g fill="none" stroke="#333" stroke-width="1"><ellipse cx="19.0" cy="189.0" rx="5.5" ry="3.2" transform="rotate(0 19.0 189.0)"/><ellipse cx="16.7" cy="193.7" rx="5.5" ry="3.2" transform="rotate(51 16.7 193.7)"/><ellipse cx="11.7" cy="194.8" rx="5.5" ry="3.2" transform="rotate(103 11.7 194.8)"/><ellipse cx="7.6" cy="191.6" rx="5.5" ry="3.2" transform="rotate(154 7.6 191.6)"/><ellipse cx="7.6" cy="186.4" rx="5.5" ry="3.2" transform="rotate(206 7.6 186.4)"/><ellipse cx="11.7" cy="183.2" rx="5.5" ry="3.2" transform="rotate(257 11.7 183.2)"/><ellipse cx="16.7" cy="184.3" rx="5.5" ry="3.2" transform="rotate(309 16.7 184.3)"/><circle cx="13" cy="189" r="3.5" fill="#666"/></g><rect x="18" y="194" width="8" height="8" fill="#fff"/><path d="M19 197.5H24M21.5 195V200" stroke="#000" stroke-width="1.3"/><circle cx="38" cy="189.5" r="11" fill="url(#fz)"/><g stroke="#666" stroke-width="0.4" fill="none" opacity=".85"><path d="M37.7 189.7l8.0 0.1"/><path d="M37.3 189.6l-8.0 -0.1"/><path d="M38.3 190.0l8.0 0.2"/><path d="M38.0 189.2l-6.5 4.7"/><path d="M38.0 189.0l-2.7 7.5"/><path d="M38.1 190.2l-7.9 -1.4"/><path d="M38.0 187.7l-1.7 -7.8"/><path d="M38.6 188.5l-3.7 7.1"/><path d="M38.3 189.0l-1.3 -7.9"/><path d="M37.9 188.9l4.1 -6.9"/><path d="M39.0 188.2l-0.8 -8.0"/><path d="M38.1 188.7l-7.9 -1.2"/><path d="M36.3 189.0l2.7 -7.5"/><path d="M38.5 188.0l6.2 -5.0"/><path d="M37.4 187.7l1.0 7.9"/><path d="M38.3 189.1l-5.1 6.1"/><path d="M39.3 190.0l-7.5 -2.9"/><path d="M37.1 188.1l-3.4 -7.2"/><path d="M38.0 189.0l2.3 -7.6"/><path d="M38.0 188.0l-7.8 -1.7"/></g><rect x="43" y="194" width="8" height="8" fill="#fff"/><path d="M44 197.5H49M46.5 195V200" stroke="#000" stroke-width="1.3"/><g stroke="#333" stroke-width=".9"><path d="M54.0 191.0l13 9.8"/><path d="M56.2 189.4l13 9.8"/><path d="M58.4 187.8l13 9.8"/><path d="M60.6 186.2l13 9.8"/><path d="M62.8 184.6l13 9.8"/></g><rect x="68" y="194" width="8" height="8" fill="#fff"/><path d="M75 195V201H69Z" fill="#f06070"/><path d="M69 197.5H74M71.5 195V200" stroke="#000" stroke-width="1.3"/><g stroke="#333" stroke-width=".9"><path d="M79.0 191.0l13 9.8"/><path d="M81.2 189.4l13 9.8"/><path d="M83.4 187.8l13 9.8"/><path d="M85.6 186.2l13 9.8"/><path d="M87.8 184.6l13 9.8"/></g><rect x="93" y="194" width="8" height="8" fill="#fff"/><path d="M100 195V201H94Z" fill="#f06070"/><path d="M94 197.5H99M96.5 195V200" stroke="#000" stroke-width="1.3"/><g stroke="#333" stroke-width=".9"><path d="M104.0 191.0l8 6.0"/><path d="M106.2 189.4l8 6.0"/><path d="M108.4 187.8l8 6.0"/><path d="M110.6 186.2l8 6.0"/><path d="M112.8 184.6l8 6.0"/></g><path d="M125 195V201H119Z" fill="#f06070"/><path d="M131 185C131 180 145 180 146 185C148 191 145 199 140 199C134 200 129 192 131 185Z" fill="#5a9a3a"/><path d="M135 183C134 189 135 195 137 198M141 183C142 189 142 195 141 198" stroke="#2f6a1f" fill="none"/><path d="M137 182L138 179L140 182Z" fill="#2f6a1f"/><ellipse cx="134" cy="188" rx="1.5" ry="4" fill="#a8d890" opacity=".7"/><rect x="143" y="194" width="8" height="8" fill="#fff"/><path d="M144 197.5H149M146.5 195V200" stroke="#000" stroke-width="1.3"/><text x="13" y="211" text-anchor="middle" font-family="Liberation Serif, serif" font-size="4" fill="#444">PROPERTY OF</text><text x="13" y="220" text-anchor="middle" font-family="Liberation Serif, serif" font-size="8" fill="#444">XCF</text><rect x="18" y="219" width="8" height="8" fill="#fff"/><path d="M19 222.5H24M21.5 220V225" stroke="#000" stroke-width="1.3"/><g stroke="#555" stroke-width="3" opacity=".7" filter="url(#b1)"><path d="M28 210L40 204M28 218L48 208M30 224L49 215M40 225L49 221"/></g><rect x="43" y="219" width="8" height="8" fill="#fff"/><path d="M44 222.5H49M46.5 220V225" stroke="#000" stroke-width="1.3"/><circle cx="63" cy="214.5" r="10" fill="url(#sun)"/><rect x="68" y="219" width="8" height="8" fill="#fff"/><path d="M75 220V226H69Z" fill="#f06070"/><path d="M69 222.5H74M71.5 220V225" stroke="#000" stroke-width="1.3"/><polygon points="88.0,206.0 89.0,211.7 93.7,208.3 90.3,213.0 96.0,214.0 90.3,215.0 93.7,219.7 89.0,216.3 88.0,222.0 87.0,216.3 82.3,219.7 85.7,215.0 80.0,214.0 85.7,213.0 82.3,208.3 87.0,211.7" fill="#222"/><rect x="93" y="219" width="8" height="8" fill="#fff"/><path d="M94 222.5H99M96.5 220V225" stroke="#000" stroke-width="1.3"/><polygon points="113.0,206.0 114.4,212.6 121.0,214.0 114.4,215.4 113.0,222.0 111.6,215.4 105.0,214.0 111.6,212.6" fill="#222"/><circle cx="113" cy="214.5" r="2.5" fill="#222"/><rect x="118" y="219" width="8" height="8" fill="#fff"/><path d="M119 222.5H124M121.5 220V225" stroke="#000" stroke-width="1.3"/><polygon points="138.0,206.0 138.8,213.2 146.0,214.0 138.8,214.8 138.0,222.0 137.2,214.8 130.0,214.0 137.2,213.2" fill="#222"/><circle cx="138" cy="214.5" r="1.5" fill="#222"/><rect x="143" y="219" width="8" height="8" fill="#fff"/><path d="M144 222.5H149M146.5 220V225" stroke="#000" stroke-width="1.3"/><polygon points="13.0,229.0 13.8,238.2 23.0,239.0 13.8,239.8 13.0,249.0 12.2,239.8 3.0,239.0 12.2,238.2" fill="#222"/><circle cx="13" cy="239.5" r="1.4" fill="#222"/><polygon points="38.0,229.0 38.8,238.2 48.0,239.0 38.8,239.8 38.0,249.0 37.2,239.8 28.0,239.0 37.2,238.2" fill="#222"/><circle cx="38" cy="239.5" r="1.4" fill="#222"/><rect x="52" y="228" width="23" height="23" fill="url(#nz)"/><path d="M55 243C59 233 69 233 71 243M59 245C61 239 66 239 68 245" stroke="#333" fill="none" stroke-width="1.5"/><rect x="68" y="244" width="8" height="8" fill="#fff"/><path d="M69 247.5H74M71.5 245V250" stroke="#000" stroke-width="1.3"/><path d="M81 250C81 242 85 239 88 237C89 231 95 229 97 229C97 235 93 239 88 239M78 234C82 234 84 237 84 241C80 241 78 238 78 234M85 243C88 241 92 242 93 245C89 246 86 245 85 243Z" fill="#666" stroke="#555"/><rect x="93" y="244" width="8" height="8" fill="#fff"/><path d="M94 247.5H99M96.5 245V250" stroke="#000" stroke-width="1.3"/><path d="M104 235C109 235 111 241 117 241" stroke="#4a8a2a" stroke-width="2.5" fill="none" stroke-dasharray="3 1.5"/><rect x="118" y="244" width="8" height="8" fill="#fff"/><path d="M125 245V251H119Z" fill="#f06070"/><path d="M119 247.5H124M121.5 245V250" stroke="#000" stroke-width="1.3"/><path d="M132 230L135 236" stroke="#aaa" stroke-width="1.5"/><rect x="143" y="244" width="8" height="8" fill="#fff"/><path d="M150 245V251H144Z" fill="#f06070"/><path d="M144 247.5H149M146.5 245V250" stroke="#000" stroke-width="1.3"/><path d="M4 258C11 254 21 256 22 262C23 270 13 274 9 270C4 268 2 262 4 258Z" fill="#333" filter="url(#b2)"/><rect x="18" y="269" width="8" height="8" fill="#fff"/><path d="M19 272.5H24M21.5 270V275" stroke="#000" stroke-width="1.3"/><path d="M29 270C27 264 32 260 36 261C36 255 44 255 45 261C50 262 50 269 45 270C41 275 34 274 29 270Z" fill="#666" filter="url(#b1)"/><g stroke="#222" stroke-width="0.8" fill="none" opacity=".85"><path d="M37.7 263.6l-0.3 -3.0"/><path d="M38.0 264.5l-0.3 3.0"/><path d="M37.8 262.6l-0.2 -3.0"/><path d="M41.4 263.5l-2.2 2.0"/><path d="M33.3 264.6l0.3 -3.0"/><path d="M34.7 261.0l2.7 1.4"/><path d="M39.1 265.4l-0.1 -3.0"/><path d="M36.7 267.7l3.0 0.2"/><path d="M39.7 264.7l-1.4 -2.6"/><path d="M36.3 259.6l-0.8 2.9"/><path d="M34.8 263.7l-2.9 0.6"/><path d="M42.6 268.2l0.9 2.8"/><path d="M44.5 263.1l3.0 0.3"/><path d="M32.5 265.5l2.9 -0.6"/></g><rect x="43" y="269" width="8" height="8" fill="#fff"/><path d="M44 272.5H49M46.5 270V275" stroke="#000" stroke-width="1.3"/><g stroke="#555" stroke-width=".9"><path d="M54.0 253V275M52 255.0H75"/><path d="M58.5 253V275M52 259.5H75"/><path d="M63.0 253V275M52 264.0H75"/><path d="M67.5 253V275M52 268.5H75"/><path d="M72.0 253V275M52 273.0H75"/></g><rect x="68" y="269" width="8" height="8" fill="#fff"/><path d="M69 272.5H74M71.5 270V275" stroke="#000" stroke-width="1.3"/><path d="M78 266C77 258 84 255 89 256C96 255 100 261 98 266C96 274 90 272 86 274C81 274 79 270 78 266Z" fill="#555" filter="url(#b1)"/><g stroke="#111" stroke-width="0.8" fill="none" opacity=".85"><path d="M86.2 264.6l0.8 2.9"/><path d="M89.4 263.5l-2.6 -1.5"/><path d="M90.3 266.9l2.9 -0.9"/><path d="M91.9 268.2l-3.0 -0.2"/><path d="M91.7 260.8l0.4 3.0"/><path d="M90.7 262.0l3.0 0.5"/><path d="M91.4 264.1l-2.9 0.9"/><path d="M87.7 264.9l-1.7 2.5"/><path d="M85.6 269.4l3.0 0.0"/><path d="M88.0 258.1l2.2 2.1"/><path d="M92.5 261.8l2.4 -1.7"/><path d="M87.4 266.5l-2.3 1.9"/><path d="M92.1 264.0l-1.9 2.3"/><path d="M86.3 264.8l2.9 0.9"/></g><rect x="93" y="269" width="8" height="8" fill="#fff"/><path d="M94 272.5H99M96.5 270V275" stroke="#000" stroke-width="1.3"/><rect x="113" y="264" width="1.2" height="1.2" fill="#000"/><path d="M128 260L139 255L149 260L138 265Z" fill="#f4f4f4" stroke="#333" stroke-width=".6"/><path d="M128 260V270L138 275V265Z" fill="#999" stroke="#333" stroke-width=".6"/><path d="M138 265V275L149 270V260Z" fill="#222"/><rect x="143" y="269" width="8" height="8" fill="#fff"/><path d="M144 272.5H149M146.5 270V275" stroke="#000" stroke-width="1.3"/><path d="M3 285L14 280L24 285L13 290ZM3 285V295L13 300V290M13 300L24 295V285" fill="none" stroke="#222" stroke-width="1.1"/><rect x="18" y="294" width="8" height="8" fill="#fff"/><path d="M19 297.5H24M21.5 295V300" stroke="#000" stroke-width="1.3"/><polygon points="38.0,278.0 40.1,283.4 45.1,280.6 43.2,286.0 48.8,287.1 43.9,290.0 47.5,294.5 41.9,293.6 41.8,299.3 38.0,295.0 34.2,299.3 34.1,293.6 28.5,294.5 32.1,290.0 27.2,287.1 32.8,286.0 30.9,280.6 35.9,283.4" fill="#000"/><circle cx="38" cy="289.5" r="7" fill="#000"/><circle cx="41" cy="287" r="1.5" fill="#999"/><rect x="43" y="294" width="8" height="8" fill="#fff"/><path d="M44 297.5H49M46.5 295V300" stroke="#000" stroke-width="1.3"/><circle cx="63" cy="289.5" r="11" fill="url(#sph)"/><rect x="68" y="294" width="8" height="8" fill="#fff"/><path d="M69 297.5H74M71.5 295V300" stroke="#000" stroke-width="1.3"/><circle cx="88" cy="289.5" r="11" fill="url(#sph)"/><rect x="93" y="294" width="8" height="8" fill="#fff"/><path d="M94 297.5H99M96.5 295V300" stroke="#000" stroke-width="1.3"/><circle cx="113" cy="289.5" r="11" fill="url(#sph)"/><rect x="118" y="294" width="8" height="8" fill="#fff"/><path d="M119 297.5H124M121.5 295V300" stroke="#000" stroke-width="1.3"/><circle cx="138" cy="289.5" r="11" fill="url(#sph)"/><rect x="143" y="294" width="8" height="8" fill="#fff"/><path d="M144 297.5H149M146.5 295V300" stroke="#000" stroke-width="1.3"/><circle cx="13" cy="314.5" r="11" fill="url(#sph)"/><rect x="18" y="319" width="8" height="8" fill="#fff"/><path d="M19 322.5H24M21.5 320V325" stroke="#000" stroke-width="1.3"/><rect x="33.5" y="310" width="9" height="9" fill="#fff" stroke="#000" stroke-width="1.200"/><rect x="59" y="310.5" width="8" height="8" fill="#fff" stroke="#333" stroke-width="1.600" filter="url(#b1)"/><rect x="78.5" y="305" width="19" height="19" fill="#fff" stroke="#000" stroke-width="1.400"/><rect x="104" y="305" width="19" height="19" fill="none" stroke="#999" stroke-width="3" filter="url(#b2)"/><rect x="129.5" y="305.5" width="18" height="18" fill="none" stroke="#000" stroke-width="5" filter="url(#b2)"/><rect x="127" y="303" width="23" height="23" fill="none" stroke="#000" stroke-width="2"/><rect x="143" y="319" width="8" height="8" fill="#fff"/><path d="M144 322.5H149M146.5 320V325" stroke="#000" stroke-width="1.3"/><rect x="4" y="330" width="19" height="19" fill="none" stroke="#bbb" stroke-width="3" filter="url(#b2)"/><rect x="18" y="344" width="8" height="8" fill="#fff"/><path d="M19 347.5H24M21.5 345V350" stroke="#000" stroke-width="1.3"/><rect x="28" y="329.5" width="21" height="21" fill="none" stroke="#555" stroke-width="1"/><rect x="43" y="344" width="8" height="8" fill="#fff"/><path d="M44 347.5H49M46.5 345V350" stroke="#000" stroke-width="1.3"/><rect x="61.5" y="338" width="4" height="4" fill="#fff" stroke="#000" stroke-width="1.100"/><rect x="86.5" y="338" width="4" height="4" fill="#ccc" stroke="#222" stroke-width="1.100"/><g stroke="#999" stroke-width="2.2" fill="none" opacity=".85"><path d="M118.4 343.0l-1.1 4.9"/><path d="M114.8 338.2l-0.5 5.0"/><path d="M111.5 338.9l-3.5 3.6"/><path d="M119.8 337.1l1.9 -4.6"/><path d="M108.0 333.7l4.7 -1.8"/><path d="M107.5 337.3l4.8 1.5"/><path d="M112.6 335.4l0.1 -5.0"/><path d="M111.6 337.2l4.8 1.5"/><path d="M113.9 338.5l-4.9 0.9"/><path d="M111.7 341.0l-0.4 -5.0"/><path d="M115.1 338.7l-2.8 -4.1"/><path d="M111.6 343.2l-3.9 3.1"/><path d="M113.6 340.1l1.3 4.8"/><path d="M116.3 336.8l0.9 4.9"/><path d="M119.6 334.6l-4.8 1.6"/><path d="M114.0 340.2l4.2 2.7"/></g><rect x="118" y="344" width="8" height="8" fill="#fff"/><path d="M119 347.5H124M121.5 345V350" stroke="#000" stroke-width="1.3"/><rect x="128" y="330" width="20" height="19" fill="url(#nz)" filter="url(#b1)"/><rect x="143" y="344" width="8" height="8" fill="#fff"/><path d="M144 347.5H149M146.5 345V350" stroke="#000" stroke-width="1.3"/><rect x="3" y="359" width="20" height="9" fill="url(#nz)" filter="url(#b1)"/><rect x="3" y="361" width="20" height="5" fill="#444" opacity=".6" filter="url(#b1)"/><rect x="18" y="369" width="8" height="8" fill="#fff"/><path d="M19 372.5H24M21.5 370V375" stroke="#000" stroke-width="1.3"/><g stroke="#000" stroke-width="2.2" fill="none" opacity=".85"><path d="M37.6 364.7l0.2 3.0"/><path d="M37.7 369.1l2.3 -2.0"/><path d="M38.0 360.3l-2.6 1.5"/><path d="M34.6 363.5l-1.6 2.6"/><path d="M40.3 364.9l2.9 -0.6"/><path d="M41.2 367.2l-2.1 -2.2"/><path d="M39.3 362.5l-0.4 3.0"/><path d="M38.0 367.6l-2.8 1.0"/><path d="M45.3 361.8l2.1 -2.2"/><path d="M38.3 364.0l-0.8 -2.9"/><path d="M41.4 361.4l-2.6 -1.6"/><path d="M41.5 364.0l2.7 -1.3"/><path d="M41.5 357.1l3.0 -0.5"/><path d="M38.0 365.0l1.7 2.5"/><path d="M31.9 363.2l2.8 -1.1"/><path d="M37.0 358.3l0.3 -3.0"/><path d="M33.2 365.3l2.9 0.7"/><path d="M38.4 361.9l2.6 -1.5"/><path d="M36.3 361.8l2.1 2.2"/><path d="M37.9 369.7l-1.0 -2.8"/><path d="M38.5 364.4l-3.0 -0.5"/><path d="M35.0 362.3l0.5 3.0"/><path d="M37.9 363.9l-1.0 2.8"/><path d="M29.6 366.1l-1.8 -2.4"/><path d="M41.2 361.1l0.3 3.0"/><path d="M38.2 372.6l-0.8 -2.9"/><path d="M37.9 364.2l-3.0 0.0"/><path d="M36.3 360.6l-0.1 3.0"/><path d="M33.9 356.8l0.4 3.0"/><path d="M41.0 364.6l-2.6 1.4"/><path d="M37.3 362.4l0.9 -2.9"/><path d="M37.7 359.5l0.8 2.9"/><path d="M40.8 363.5l1.3 -2.7"/><path d="M38.2 366.0l0.2 -3.0"/><path d="M35.6 372.2l-3.0 0.1"/><path d="M38.8 365.9l-2.6 1.5"/><path d="M33.7 356.7l1.8 2.4"/><path d="M36.5 365.2l3.0 -0.5"/><path d="M38.3 364.4l2.8 1.1"/><path d="M31.7 369.0l2.2 -2.0"/><path d="M37.0 355.1l2.7 -1.3"/><path d="M37.2 365.5l2.8 -1.2"/><path d="M38.0 363.7l-1.5 -2.6"/><path d="M35.6 366.3l-1.5 2.6"/><path d="M38.0 364.0l-0.6 2.9"/></g><rect x="43" y="369" width="8" height="8" fill="#fff"/><path d="M44 372.5H49M46.5 370V375" stroke="#000" stroke-width="1.3"/><g stroke="#888" stroke-width="2" fill="none" opacity=".85"><path d="M58.5 370.1l3.6 3.5"/><path d="M64.6 363.6l-3.1 3.9"/><path d="M65.8 358.1l-4.6 2.1"/><path d="M66.6 365.2l-3.5 3.6"/><path d="M64.3 363.2l-3.3 3.8"/><path d="M63.2 363.9l-4.2 2.7"/><path d="M65.3 358.3l4.8 1.3"/><path d="M63.5 364.1l4.4 -2.4"/><path d="M62.7 370.0l4.0 -3.0"/><path d="M61.8 365.8l4.8 -1.3"/><path d="M61.4 362.6l-1.1 -4.9"/><path d="M62.1 366.0l5.0 0.1"/><path d="M63.2 356.7l-3.3 -3.7"/><path d="M63.2 363.9l0.5 5.0"/><path d="M55.4 365.2l4.8 -1.4"/><path d="M61.5 365.3l-4.5 2.1"/><path d="M55.6 364.3l2.0 4.6"/><path d="M64.9 358.4l2.2 -4.5"/></g><rect x="68" y="369" width="8" height="8" fill="#fff"/><path d="M69 372.5H74M71.5 370V375" stroke="#000" stroke-width="1.3"/><circle cx="88" cy="364" r="10" fill="url(#nz)"/><path d="M81 366C83 358 93 358 95 366M84 368C86 363 90 363 92 368M80 362C84 354 94 355 96 361" stroke="#222" fill="none" stroke-width="1.3"/><rect x="93" y="369" width="8" height="8" fill="#fff"/><path d="M94 372.5H99M96.5 370V375" stroke="#000" stroke-width="1.3"/><path d="M104 358C109 354 115 357 119 361C123 364 124 370 119 372C113 374 110 368 109 364C106 363 103 361 104 358Z" fill="#444" filter="url(#b1)"/><path d="M107 359C111 358 115 361 118 365" stroke="#ccc" fill="none"/><rect x="118" y="369" width="8" height="8" fill="#fff"/><path d="M119 372.5H124M121.5 370V375" stroke="#000" stroke-width="1.3"/></svg></div><div class="sb" style="left:167px;top:22px;width:15px;height:414px"></div><svg class="a" style="left:169px;top:24px" width="11" height="11" viewBox="0 0 11 11"><path d="M5.500 .5L10.500 10.500H.5Z" fill="#d6d6d6"/><path d="M5.500 .5L.5 10.500" stroke="#fff"/><path d="M5.500 .5L10.500 10.500H.5" stroke="#000" fill="none"/></svg><div class="btn" style="left:169px;top:35px;width:11px;height:388px"></div><svg class="a" style="left:169px;top:423px" width="11" height="11" viewBox="0 0 11 11"><path d="M.5 .5H10.500L5.500 10.500Z" fill="#d6d6d6"/><path d="M10.500 .5H.5L5.500 10.500" stroke="#fff" fill="none"/><path d="M10.500 .5L5.500 10.500" stroke="#000"/></svg><span class="t" style="left:0px;top:439px;font-size:12px;width:168px;text-align:center;left:0">20.0</span><span class="t" style="left:2px;top:453px;font-size:12.5px;">Интервал:</span><div class="sb" style="left:67px;top:452px;width:115px;height:14px"></div><div class="btn" style="left:69px;top:454px;width:31px;height:10px"></div><div class="a" style="left:84px;top:456px;width:2px;height:6px;border-left:1px solid #8e8e8e;border-right:1px solid #fff"></div><div class="btn " style="left:8px;top:473px;width:44px;height:22px;padding-top:4px;font-size:12.5px">Новая</div><div class="btn dis" style="left:62px;top:473px;width:50px;height:22px;padding-top:4px;font-size:12.5px">Правка</div><div class="btn dis" style="left:121px;top:473px;width:57px;height:22px;padding-top:4px;font-size:12.5px">Удалить</div><div class="a" style="left:0;top:500px;width:185px;height:2px;border-top:1px solid #8e8e8e;border-bottom:1px solid #fff"></div><div class="btn " style="left:8px;top:511px;width:78px;height:23px;padding-top:5px;font-size:12.5px">Обновить</div><div class="a" style="left:95px;top:506px;width:88px;height:32px;border:1px solid;border-color:#000 #fff #fff #000;box-shadow:inset 1px 1px 0 #8e8e8e"></div><div class="btn " style="left:100px;top:511px;width:78px;height:23px;padding-top:5px;font-size:12.5px">Закрыть</div></div><div class="rb" style="top:565px"></div></div>
<div class="win" style="left:287px;top:7px;width:290px;height:445px;z-index:5"><div class="tb f"><i class="l"></i><i class="m"></i><i class="r"></i><svg style="left:6px;top:6px" width="10" height="10" viewBox="0 0 10 10"><rect x="0.600" y="0.600" width="8.800" height="8.800" fill="none" stroke="#fff" stroke-width="1.200"/><rect x="0" y="0" width="10" height="3" fill="#fff"/></svg><svg style="right:5px" width="12" height="11" viewBox="0 0 12 11"><path d="M1.5 1L10.5 10M10.5 1L1.5 10" stroke="#fff" stroke-width="2.4"/></svg><b style="letter-spacing:0.8px">1.tif-0.0 (RGB) 100%</b></div><div class="ct" style="height:413px"><div class="btn" style="left:2px;top:2px;width:18px;height:18px;box-shadow:none"></div><svg class="a" style="left:5px;top:5px" width="13" height="12" viewBox="0 0 13 12"><path d="M.5 .5L12.500 6L.5 11.500Z" fill="#d6d6d6"/><path d="M.5 11.500V.5L12.500 6" stroke="#fff" fill="none"/><path d="M12.500 6L.5 11.500" stroke="#000"/></svg><svg class="a" style="left:20px;top:2px" width="250" height="18" viewBox="0 0 250 18"><rect width="250" height="18" fill="#d6d6d6"/><path d="M0 17H250M249.500 0V18" stroke="#000"/><path d="M0 .5H250M.5 0V17" stroke="#fff"/><path d="M1.5 2V17" stroke="#000"/><text x="4.0" y="11.500" font-family="Liberation Sans, sans-serif" font-size="10.5" fill="#000">0</text><path d="M11.5 12.500V17" stroke="#000"/><path d="M21.5 12.500V17" stroke="#000"/><path d="M31.5 12.500V17" stroke="#000"/><path d="M41.5 12.500V17" stroke="#000"/><path d="M51.5 12V17" stroke="#000"/><path d="M61.5 12.500V17" stroke="#000"/><path d="M71.5 12.500V17" stroke="#000"/><path d="M81.5 12.500V17" stroke="#000"/><path d="M91.5 12.500V17" stroke="#000"/><path d="M101.5 2V17" stroke="#000"/><text x="104.0" y="11.500" font-family="Liberation Sans, sans-serif" font-size="10.5" fill="#000">100</text><path d="M111.5 12.500V17" stroke="#000"/><path d="M121.5 12.500V17" stroke="#000"/><path d="M131.5 12.500V17" stroke="#000"/><path d="M141.5 12.500V17" stroke="#000"/><path d="M151.5 12V17" stroke="#000"/><path d="M161.5 12.500V17" stroke="#000"/><path d="M171.5 12.500V17" stroke="#000"/><path d="M181.5 12.500V17" stroke="#000"/><path d="M191.5 12.500V17" stroke="#000"/><path d="M201.5 2V17" stroke="#000"/><text x="204.0" y="11.500" font-family="Liberation Sans, sans-serif" font-size="10.5" fill="#000">200</text><path d="M211.5 12.500V17" stroke="#000"/><path d="M221.5 12.500V17" stroke="#000"/><path d="M231.5 12.500V17" stroke="#000"/><path d="M241.5 12.500V17" stroke="#000"/><path d="M170 11H178L174 15.500Z" fill="#000"/></svg><svg class="a" style="left:2px;top:20px" width="18" height="351" viewBox="0 0 18 351"><rect width="18" height="351" fill="#d6d6d6"/><path d="M17.500 0V351M0 350.500H18" stroke="#000"/><path d="M.5 0V351" stroke="#fff"/><path d="M3 1.5H17" stroke="#000"/><text x="3.500" y="12.5" font-family="Liberation Sans, sans-serif" font-size="10.5" fill="#000">0</text><path d="M13 11.5H17" stroke="#000"/><path d="M9 21.5H17" stroke="#000"/><path d="M9 31.5H17" stroke="#000"/><path d="M9 41.5H17" stroke="#000"/><path d="M9 51.5H17" stroke="#000"/><path d="M9 61.5H17" stroke="#000"/><path d="M9 71.5H17" stroke="#000"/><path d="M9 81.5H17" stroke="#000"/><path d="M13 91.5H17" stroke="#000"/><path d="M3 101.5H17" stroke="#000"/><text x="3.500" y="112.5" font-family="Liberation Sans, sans-serif" font-size="10.5" fill="#000">1</text><text x="3.500" y="123.5" font-family="Liberation Sans, sans-serif" font-size="10.5" fill="#000">0</text><text x="3.500" y="134.5" font-family="Liberation Sans, sans-serif" font-size="10.5" fill="#000">0</text><path d="M13 111.5H17" stroke="#000"/><path d="M9 121.5H17" stroke="#000"/><path d="M9 131.5H17" stroke="#000"/><path d="M9 141.5H17" stroke="#000"/><path d="M9 151.5H17" stroke="#000"/><path d="M9 161.5H17" stroke="#000"/><path d="M9 171.5H17" stroke="#000"/><path d="M9 181.5H17" stroke="#000"/><path d="M13 191.5H17" stroke="#000"/><path d="M3 201.5H17" stroke="#000"/><text x="3.500" y="212.5" font-family="Liberation Sans, sans-serif" font-size="10.5" fill="#000">2</text><text x="3.500" y="223.5" font-family="Liberation Sans, sans-serif" font-size="10.5" fill="#000">0</text><text x="3.500" y="234.5" font-family="Liberation Sans, sans-serif" font-size="10.5" fill="#000">0</text><path d="M13 211.5H17" stroke="#000"/><path d="M9 221.5H17" stroke="#000"/><path d="M9 231.5H17" stroke="#000"/><path d="M9 241.5H17" stroke="#000"/><path d="M9 251.5H17" stroke="#000"/><path d="M9 261.5H17" stroke="#000"/><path d="M9 271.5H17" stroke="#000"/><path d="M9 281.5H17" stroke="#000"/><path d="M13 291.5H17" stroke="#000"/><path d="M3 301.5H17" stroke="#000"/><text x="3.500" y="312.5" font-family="Liberation Sans, sans-serif" font-size="10.5" fill="#000">3</text><text x="3.500" y="323.5" font-family="Liberation Sans, sans-serif" font-size="10.5" fill="#000">0</text><text x="3.500" y="334.5" font-family="Liberation Sans, sans-serif" font-size="10.5" fill="#000">0</text><path d="M13 311.5H17" stroke="#000"/><path d="M9 321.5H17" stroke="#000"/><path d="M9 331.5H17" stroke="#000"/><path d="M9 341.5H17" stroke="#000"/><path d="M10 92.500V100.500L14.500 96.500Z" fill="#000"/></svg><div class="a" style="left:21px;top:21px;width:248px;height:350px;overflow:hidden"><svg class="a" width="248" height="350" viewBox="0 0 248 350" preserveAspectRatio="none" style="left:0;top:0"><defs>
<filter id="pb" x="-5%" y="-5%" width="110%" height="110%"><feGaussianBlur stdDeviation="0.6"/></filter>
<filter id="pb3" x="-30%" y="-30%" width="160%" height="160%"><feGaussianBlur stdDeviation="4"/></filter>
<linearGradient id="pw" x1="0" x2="1"><stop offset="0" stop-color="#cdc9c1"/><stop offset=".3" stop-color="#d6d2ca"/><stop offset=".8" stop-color="#dcd9d3"/><stop offset="1" stop-color="#e2dfda"/></linearGradient>
<linearGradient id="pd" x1="0" x2="1"><stop offset="0" stop-color="#7a3a1c"/><stop offset=".1" stop-color="#682e16"/><stop offset=".2" stop-color="#7a3c20"/><stop offset=".215" stop-color="#b08a5c"/><stop offset=".235" stop-color="#7c4a26"/><stop offset=".44" stop-color="#80502a"/><stop offset=".46" stop-color="#683c20"/><stop offset="1" stop-color="#744826"/></linearGradient>
<linearGradient id="ps" x1="0" y1="0" x2="1" y2="1"><stop offset="0" stop-color="#4c5d70"/><stop offset=".5" stop-color="#435365"/><stop offset="1" stop-color="#374553"/></linearGradient>
<linearGradient id="pl" x1="0" x2="1"><stop offset="0" stop-color="#b87c4c"/><stop offset=".4" stop-color="#dca272"/><stop offset="1" stop-color="#c88c5c"/></linearGradient>
<radialGradient id="pf" cx="42%" cy="45%" r="62%"><stop offset="0" stop-color="#e8bca4"/><stop offset=".65" stop-color="#d29c80"/><stop offset="1" stop-color="#a66c52"/></radialGradient>
<pattern id="pk" width="5" height="5" patternUnits="userSpaceOnUse" patternTransform="rotate(25)"><rect x=".5" y=".5" width="2" height="2" fill="#222e3a" opacity=".6"/><rect x="3" y="3" width="1.6" height="1.6" fill="#8494a4" opacity=".5"/></pattern>
<pattern id="pk2" width="22" height="18" patternUnits="userSpaceOnUse" patternTransform="rotate(-20)"><ellipse cx="6" cy="5" rx="4" ry="3" fill="#8e99a6"/><ellipse cx="17" cy="14" rx="4" ry="3" fill="#8e99a6"/></pattern>
<pattern id="pkk" width="46" height="40" patternUnits="userSpaceOnUse" patternTransform="rotate(-20)"><ellipse cx="12" cy="10" rx="9" ry="6.500" fill="url(#pk)"/><ellipse cx="35" cy="30" rx="9" ry="6.500" fill="url(#pk)"/></pattern>
</defs><g filter="url(#pb)"><rect x="-4" y="-4" width="256" height="358" fill="url(#pw)"/><g fill="#c6c1b6" opacity=".45" filter="url(#pb3)"><ellipse cx="28" cy="50" rx="9" ry="20"/><ellipse cx="52" cy="140" rx="8" ry="22"/><ellipse cx="228" cy="60" rx="5" ry="22"/><ellipse cx="14" cy="180" rx="7" ry="18"/><ellipse cx="60" cy="30" rx="6" ry="10"/></g><rect x="82" y="-4" width="123" height="210" fill="#c8a060"/><rect x="91" y="-4" width="100" height="210" fill="url(#pd)"/><rect x="137" y="-4" width="54" height="26" fill="#866034"/><rect x="138" y="21" width="53" height="7" fill="#583014"/><rect x="138" y="28" width="53" height="90" fill="#704422"/><rect x="79.500" y="-4" width="2.500" height="108" fill="#efebe4"/><g stroke="#6a3218" stroke-width="1" opacity=".5"><path d="M96 0V100M102 0V100M108 0V100"/></g><path d="M160 178L197 176L202 212L172 252L140 270Z" fill="#7c4a28"/><path d="M196 177L215 175L207 201L197 202Z" fill="#e4dcd2"/><path d="M-2 286L40 284L62 354L-2 354Z" fill="#5e3619"/><path d="M86 105C100 99 114 93 128 86L136 80L150 100L162 118L120 118Z" fill="#cf9c80"/><path d="M124 92C128 100 132 108 138 114" stroke="#b98568" stroke-width="1.500" fill="none"/><path d="M250 156L228 160C224 166 220 172 214 180C212 188 210 194 207 200C192 214 174 230 160 244L120 260L100 300L96 354L252 354Z" fill="#0c0d12"/><path d="M150 310C180 296 215 292 250 300" stroke="#1e2029" stroke-width="4" fill="none"/><path d="M24 272L118 272L121 313L97 354L43 354L27 310Z" fill="#cc9060"/><path d="M80 282C94 288 108 300 120 313C112 326 104 340 97 354L84 354Z" fill="#c88a5a"/><path d="M20 287C28 278 34 274 41 273C52 271 62 272 68 273C74 275 78 279 82 283C86 296 90 310 91 320C94 332 96 344 97 354L43 354C38 340 32 324 27 310Z" fill="url(#pl)"/><ellipse cx="75" cy="340" rx="9" ry="12" fill="#f6dcc6" opacity=".85" filter="url(#pb3)"/><path d="M82 284C86 300 90 318 93 350" stroke="#9c6238" stroke-width="1.800" fill="none" opacity=".7"/><path d="M-2 288L11 289C14 305 12 325 13 346L3 348L-2 340Z" fill="#c99878"/><path d="M64 107C74 103 84 102 91 104C104 110 116 113 128 114C140 116 150 116 160 116C168 116 174 115 180 114C192 110 204 108 214 109C224 112 232 113 237 112C242 110 246 107 250 104L250 157L228 160C224 166 220 172 214 176C204 178 192 180 180 181C176 195 166 215 158 232C152 252 146 270 140 284C134 296 128 306 121 313C112 304 102 294 91 285C84 280 76 275 68 273C58 271 46 271 38 273C30 278 24 283 18 286L-2 287L-2 268C0 250 3 240 5 232C8 218 12 206 18 196C24 180 32 164 41 150C48 134 56 118 64 107Z" fill="url(#ps)"/><path d="M64 107C74 103 84 102 91 104C104 110 116 113 128 114C140 116 150 116 160 116C168 116 174 115 180 114C192 110 204 108 214 109C224 112 232 113 237 112C242 110 246 107 250 104L250 157L228 160C224 166 220 172 214 176C204 178 192 180 180 181C176 195 166 215 158 232C152 252 146 270 140 284C134 296 128 306 121 313C112 304 102 294 91 285C84 280 76 275 68 273C58 271 46 271 38 273C30 278 24 283 18 286L-2 287L-2 268C0 250 3 240 5 232C8 218 12 206 18 196C24 180 32 164 41 150C48 134 56 118 64 107Z" fill="url(#pkk)" opacity=".7"/><ellipse cx="122" cy="165" rx="48" ry="55" fill="url(#pk2)" opacity=".28"/><g stroke="#33414f" stroke-width="5" fill="none" opacity=".35" filter="url(#pb3)"><path d="M60 140C48 190 40 230 36 272"/><path d="M178 122C184 150 178 175 168 205"/><path d="M6 250C30 252 60 262 90 284"/></g><path d="M138 56C141 46 147 38 153 33C160 27 168 24 176 24C184 24 190 27 195 32C202 38 207 44 210 54C214 62 217 72 218 88C218 98 215 106 213 112C211 122 211 130 209 138C206 148 203 156 199 164C196 154 194 148 191 142C188 134 184 124 180 118L170 70Z" fill="#3a1a13"/><path d="M141 57C148 48 156 46 163 47C172 48 178 52 182 58C186 64 186 72 185 78C184 86 183 92 180 96C176 102 172 105 168 107C162 111 156 112 151 111C146 110 142 108 140 106C135 102 133 96 133 90C133 84 134 80 135 76C137 68 138 62 141 57Z" fill="url(#pf)"/><ellipse cx="156" cy="68" rx="6" ry="3.500" fill="#7a5a58" opacity=".55" transform="rotate(25 156 68)"/><ellipse cx="175" cy="85" rx="6" ry="3.500" fill="#7a5a58" opacity=".55" transform="rotate(25 175 85)"/><ellipse cx="156" cy="68.500" rx="2.800" ry="1.900" fill="#2c2c38"/><ellipse cx="175" cy="85.500" rx="2.800" ry="1.900" fill="#2c2c38"/><path d="M137 60C140 46 150 34 164 29C176 26 190 30 198 40C204 50 206 62 204 80C200 68 194 60 186 56C182 54 178 54 174 56C168 60 160 60 154 58C148 56 142 56 137 60Z" fill="#3f1f18"/><path d="M182 54C188 66 190 90 184 112C182 118 182 120 180 120C190 116 200 96 200 70C198 60 192 54 182 54Z" fill="#3a1a13"/><path d="M200 44C210 62 214 100 205 140" stroke="#7c3c28" stroke-width="5" fill="none" opacity=".5"/><path d="M176 52C170 60 164 66 156 72M180 56C174 64 170 72 168 82M170 50C166 56 160 62 152 64" stroke="#2a120e" stroke-width="1.100" fill="none"/><path d="M144 94C148 97 153 98 158 97" stroke="#b05a5c" stroke-width="2.400" fill="none"/><path d="M164 76C162 82 159 86 162 89" stroke="#b88468" stroke-width="1.200" fill="none"/></g></svg></div><svg class="a" style="left:20px;top:20px" width="251" height="353" viewBox="0 0 251 353"><rect x="1.500" y="1.500" width="248" height="350" fill="none" stroke="#f4f040" stroke-width="1.600"/><rect x="1.500" y="1.500" width="248" height="350" fill="none" stroke="#000" stroke-width="1" stroke-dasharray="4 4"/></svg><div class="sb" style="left:271px;top:2px;width:15px;height:369px"></div><svg class="a" style="left:273px;top:4px" width="11" height="11" viewBox="0 0 11 11"><path d="M5.500 .5L10.500 10.500H.5Z" fill="#d6d6d6"/><path d="M5.500 .5L.5 10.500" stroke="#fff"/><path d="M5.500 .5L10.500 10.500H.5" stroke="#000" fill="none"/></svg><div class="btn" style="left:273px;top:15px;width:11px;height:343px"></div><svg class="a" style="left:273px;top:358px" width="11" height="11" viewBox="0 0 11 11"><path d="M.5 .5H10.500L5.500 10.500Z" fill="#d6d6d6"/><path d="M10.500 .5H.5L5.500 10.500" stroke="#fff" fill="none"/><path d="M10.500 .5L5.500 10.500" stroke="#000"/></svg><div class="in" style="left:2px;top:372px;width:15px;height:15px;box-shadow:inset 1px 1px 0 #000"></div><svg class="a" style="left:4px;top:374px" width="12" height="12" viewBox="0 0 12 12"><rect x="1" y="1" width="9" height="9" fill="#bbb" stroke="#000" stroke-width="1.400" stroke-dasharray="2.500 2"/></svg><div class="btn" style="left:18px;top:372px;width:15px;height:15px"></div><div class="a" style="left:20px;top:374px;width:10px;height:11px;border:2px solid #e81010;background:#c8d0e8"></div><div class="sb" style="left:34px;top:372px;width:236px;height:15px"></div><svg class="a" style="left:36px;top:374px" width="11" height="11" viewBox="0 0 11 11"><path d="M10.500 .5V10.500L.5 5.500Z" fill="#d6d6d6"/><path d="M10.500 .5L.5 5.500" stroke="#fff"/><path d="M.5 5.500L10.500 10.500V.5" stroke="#000" fill="none"/></svg><div class="btn" style="left:47px;top:374px;width:210px;height:11px"></div><svg class="a" style="left:257px;top:374px" width="11" height="11" viewBox="0 0 11 11"><path d="M.5 .5L10.500 5.500L.5 10.500Z" fill="#d6d6d6"/><path d="M.5 10.500V.5L10.500 5.500" stroke="#fff" fill="none"/><path d="M10.500 5.500L.5 10.500" stroke="#000"/></svg><svg class="a" style="left:271px;top:372px" width="15" height="15" viewBox="0 0 15 15"><path d="M7.500 1V14M1 7.500H14" stroke="#000" stroke-width="1.800"/><path d="M7.500 0L4.500 3.500H10.500ZM7.500 15L4.500 11.500H10.500ZM0 7.500L3.500 4.500V10.500ZM15 7.500L11.500 4.500V10.500Z" fill="#000"/></svg><div class="in" style="left:2px;top:389px;width:55px;height:23px"></div><span class="t" style="left:9px;top:395px;font-size:12px;letter-spacing:.3px">172, 95</span><div class="in" style="left:58px;top:389px;width:94px;height:23px;overflow:hidden"><span class="t" style="left:2px;top:5px;font-size:12px;letter-spacing:.1px">1.tif-0.0 (RGB) 1</span></div><div class="in" style="left:153px;top:389px;width:81px;height:23px"></div><div class="btn dis" style="left:235px;top:389px;width:52px;height:22px;padding-top:4px;font-size:12.5px">Отмена</div></div><div class="rb" style="top:437px"></div></div>
<div class="win" style="left:660px;top:107px;width:366px;height:370px;z-index:0"><div class="tb"><i class="l"></i><i class="m"></i><svg style="left:6px;top:6px" width="10" height="10" viewBox="0 0 10 10"><rect x="0.600" y="0.600" width="8.800" height="8.800" fill="none" stroke="#000" stroke-width="1.200"/><rect x="0" y="0" width="10" height="3" fill="#000"/></svg><b style="letter-spacing:0.2px">Слои, Каналы и Контуры</b></div><div class="ct" style="height:338px"><span class="t" style="left:5px;top:14px;font-size:12.4px;">Изображение:</span><div class="btn" style="left:91px;top:3px;width:234px;height:34px"></div><div class="btn" style="left:303px;top:16px;width:13px;height:7px;box-shadow:none;border-color:#fff #000 #000 #fff"></div><div class="a" style="left:101px;top:7px;width:17px;height:24px;overflow:hidden;"><svg class="a" width="17" height="24" viewBox="0 0 248 350" preserveAspectRatio="none" style="left:0;top:0"><defs>
<filter id="t1b" x="-5%" y="-5%" width="110%" height="110%"><feGaussianBlur stdDeviation="0.6"/></filter>
<filter id="t1b3" x="-30%" y="-30%" width="160%" height="160%"><feGaussianBlur stdDeviation="4"/></filter>
<linearGradient id="t1w" x1="0" x2="1"><stop offset="0" stop-color="#cdc9c1"/><stop offset=".3" stop-color="#d6d2ca"/><stop offset=".8" stop-color="#dcd9d3"/><stop offset="1" stop-color="#e2dfda"/></linearGradient>
<linearGradient id="t1d" x1="0" x2="1"><stop offset="0" stop-color="#7a3a1c"/><stop offset=".1" stop-color="#682e16"/><stop offset=".2" stop-color="#7a3c20"/><stop offset=".215" stop-color="#b08a5c"/><stop offset=".235" stop-color="#7c4a26"/><stop offset=".44" stop-color="#80502a"/><stop offset=".46" stop-color="#683c20"/><stop offset="1" stop-color="#744826"/></linearGradient>
<linearGradient id="t1s" x1="0" y1="0" x2="1" y2="1"><stop offset="0" stop-color="#4c5d70"/><stop offset=".5" stop-color="#435365"/><stop offset="1" stop-color="#374553"/></linearGradient>
<linearGradient id="t1l" x1="0" x2="1"><stop offset="0" stop-color="#b87c4c"/><stop offset=".4" stop-color="#dca272"/><stop offset="1" stop-color="#c88c5c"/></linearGradient>
<radialGradient id="t1f" cx="42%" cy="45%" r="62%"><stop offset="0" stop-color="#e8bca4"/><stop offset=".65" stop-color="#d29c80"/><stop offset="1" stop-color="#a66c52"/></radialGradient>
<pattern id="t1k" width="5" height="5" patternUnits="userSpaceOnUse" patternTransform="rotate(25)"><rect x=".5" y=".5" width="2" height="2" fill="#222e3a" opacity=".6"/><rect x="3" y="3" width="1.6" height="1.6" fill="#8494a4" opacity=".5"/></pattern>
<pattern id="t1k2" width="22" height="18" patternUnits="userSpaceOnUse" patternTransform="rotate(-20)"><ellipse cx="6" cy="5" rx="4" ry="3" fill="#8e99a6"/><ellipse cx="17" cy="14" rx="4" ry="3" fill="#8e99a6"/></pattern>
<pattern id="t1kk" width="46" height="40" patternUnits="userSpaceOnUse" patternTransform="rotate(-20)"><ellipse cx="12" cy="10" rx="9" ry="6.500" fill="url(#t1k)"/><ellipse cx="35" cy="30" rx="9" ry="6.500" fill="url(#t1k)"/></pattern>
</defs><g filter="url(#t1b)"><rect x="-4" y="-4" width="256" height="358" fill="url(#t1w)"/><g fill="#c6c1b6" opacity=".45" filter="url(#t1b3)"><ellipse cx="28" cy="50" rx="9" ry="20"/><ellipse cx="52" cy="140" rx="8" ry="22"/><ellipse cx="228" cy="60" rx="5" ry="22"/><ellipse cx="14" cy="180" rx="7" ry="18"/><ellipse cx="60" cy="30" rx="6" ry="10"/></g><rect x="82" y="-4" width="123" height="210" fill="#c8a060"/><rect x="91" y="-4" width="100" height="210" fill="url(#t1d)"/><rect x="137" y="-4" width="54" height="26" fill="#866034"/><rect x="138" y="21" width="53" height="7" fill="#583014"/><rect x="138" y="28" width="53" height="90" fill="#704422"/><rect x="79.500" y="-4" width="2.500" height="108" fill="#efebe4"/><g stroke="#6a3218" stroke-width="1" opacity=".5"><path d="M96 0V100M102 0V100M108 0V100"/></g><path d="M160 178L197 176L202 212L172 252L140 270Z" fill="#7c4a28"/><path d="M196 177L215 175L207 201L197 202Z" fill="#e4dcd2"/><path d="M-2 286L40 284L62 354L-2 354Z" fill="#5e3619"/><path d="M86 105C100 99 114 93 128 86L136 80L150 100L162 118L120 118Z" fill="#cf9c80"/><path d="M124 92C128 100 132 108 138 114" stroke="#b98568" stroke-width="1.500" fill="none"/><path d="M250 156L228 160C224 166 220 172 214 180C212 188 210 194 207 200C192 214 174 230 160 244L120 260L100 300L96 354L252 354Z" fill="#0c0d12"/><path d="M150 310C180 296 215 292 250 300" stroke="#1e2029" stroke-width="4" fill="none"/><path d="M24 272L118 272L121 313L97 354L43 354L27 310Z" fill="#cc9060"/><path d="M80 282C94 288 108 300 120 313C112 326 104 340 97 354L84 354Z" fill="#c88a5a"/><path d="M20 287C28 278 34 274 41 273C52 271 62 272 68 273C74 275 78 279 82 283C86 296 90 310 91 320C94 332 96 344 97 354L43 354C38 340 32 324 27 310Z" fill="url(#t1l)"/><ellipse cx="75" cy="340" rx="9" ry="12" fill="#f6dcc6" opacity=".85" filter="url(#t1b3)"/><path d="M82 284C86 300 90 318 93 350" stroke="#9c6238" stroke-width="1.800" fill="none" opacity=".7"/><path d="M-2 288L11 289C14 305 12 325 13 346L3 348L-2 340Z" fill="#c99878"/><path d="M64 107C74 103 84 102 91 104C104 110 116 113 128 114C140 116 150 116 160 116C168 116 174 115 180 114C192 110 204 108 214 109C224 112 232 113 237 112C242 110 246 107 250 104L250 157L228 160C224 166 220 172 214 176C204 178 192 180 180 181C176 195 166 215 158 232C152 252 146 270 140 284C134 296 128 306 121 313C112 304 102 294 91 285C84 280 76 275 68 273C58 271 46 271 38 273C30 278 24 283 18 286L-2 287L-2 268C0 250 3 240 5 232C8 218 12 206 18 196C24 180 32 164 41 150C48 134 56 118 64 107Z" fill="url(#t1s)"/><g stroke="#33414f" stroke-width="5" fill="none" opacity=".35" filter="url(#t1b3)"><path d="M60 140C48 190 40 230 36 272"/><path d="M178 122C184 150 178 175 168 205"/><path d="M6 250C30 252 60 262 90 284"/></g><path d="M138 56C141 46 147 38 153 33C160 27 168 24 176 24C184 24 190 27 195 32C202 38 207 44 210 54C214 62 217 72 218 88C218 98 215 106 213 112C211 122 211 130 209 138C206 148 203 156 199 164C196 154 194 148 191 142C188 134 184 124 180 118L170 70Z" fill="#3a1a13"/><path d="M141 57C148 48 156 46 163 47C172 48 178 52 182 58C186 64 186 72 185 78C184 86 183 92 180 96C176 102 172 105 168 107C162 111 156 112 151 111C146 110 142 108 140 106C135 102 133 96 133 90C133 84 134 80 135 76C137 68 138 62 141 57Z" fill="url(#t1f)"/><ellipse cx="156" cy="68" rx="6" ry="3.500" fill="#7a5a58" opacity=".55" transform="rotate(25 156 68)"/><ellipse cx="175" cy="85" rx="6" ry="3.500" fill="#7a5a58" opacity=".55" transform="rotate(25 175 85)"/><ellipse cx="156" cy="68.500" rx="2.800" ry="1.900" fill="#2c2c38"/><ellipse cx="175" cy="85.500" rx="2.800" ry="1.900" fill="#2c2c38"/><path d="M137 60C140 46 150 34 164 29C176 26 190 30 198 40C204 50 206 62 204 80C200 68 194 60 186 56C182 54 178 54 174 56C168 60 160 60 154 58C148 56 142 56 137 60Z" fill="#3f1f18"/><path d="M182 54C188 66 190 90 184 112C182 118 182 120 180 120C190 116 200 96 200 70C198 60 192 54 182 54Z" fill="#3a1a13"/><path d="M200 44C210 62 214 100 205 140" stroke="#7c3c28" stroke-width="5" fill="none" opacity=".5"/><path d="M176 52C170 60 164 66 156 72M180 56C174 64 170 72 168 82M170 50C166 56 160 62 152 64" stroke="#2a120e" stroke-width="1.100" fill="none"/><path d="M144 94C148 97 153 98 158 97" stroke="#b05a5c" stroke-width="2.400" fill="none"/><path d="M164 76C162 82 159 86 162 89" stroke="#b88468" stroke-width="1.200" fill="none"/></g></svg></div><span class="t" style="left:127px;top:14px;font-size:12px;">1.tif-0</span><div class="btn" style="left:328px;top:2px;width:40px;height:35px;border-color:#000 #fff #fff #000;box-shadow:inset 1px 1px 0 #8e8e8e;background:#c3c3c3"></div><span class="t" style="left:332px;top:15px;font-size:12px;">Авто</span><div class="a" style="left:0;top:40px;width:370px;height:2px;border-top:1px solid #8e8e8e;border-bottom:1px solid #fff"></div><div class="btn" style="left:3px;top:71px;width:359px;height:237px"></div><div class="btn" style="left:44px;top:48px;width:56px;height:23px;background:#c3c3c3;border-bottom:none;box-shadow:inset -1px 0 0 #8e8e8e"></div><span class="t" style="left:49px;top:55px;font-size:12.5px;">Каналы</span><div class="btn" style="left:100px;top:48px;width:61px;height:23px;background:#c3c3c3;border-bottom:none;box-shadow:inset -1px 0 0 #8e8e8e"></div><span class="t" style="left:104px;top:55px;font-size:12.5px;">Контуры</span><div class="btn" style="left:3px;top:46px;width:41px;height:27px;border-bottom:none;box-shadow:inset -1px 0 0 #8e8e8e"></div><span class="t" style="left:8px;top:54px;font-size:12.5px;">Слои</span><span class="t" style="left:8px;top:84px;font-size:12.5px;">Режим:</span><div class="btn" style="left:55px;top:77px;width:197px;height:26px"></div><div class="btn" style="left:230px;top:86px;width:13px;height:7px;box-shadow:none;border-color:#fff #000 #000 #fff"></div><span class="t" style="left:62px;top:84px;font-size:12.5px;">Нормальная</span><div class="btn" style="left:262px;top:86px;width:9px;height:10px"></div><span class="t" style="left:275px;top:84px;font-size:12.5px;">Сохр. прозр.</span><span class="t" style="left:8px;top:107px;font-size:12.7px;">Непрозрачность:</span><div class="sb" style="left:114px;top:106px;width:210px;height:14px"></div><div class="btn" style="left:291px;top:108px;width:31px;height:10px"></div><div class="a" style="left:306px;top:110px;width:2px;height:6px;border-left:1px solid #8e8e8e;border-right:1px solid #fff"></div><span class="t" style="left:327px;top:107px;font-size:12px;">100.0</span><div class="in" style="left:6px;top:123px;width:334px;height:151px;background:#fff"></div><div class="a" style="left:8px;top:125px;width:330px;height:38px;background:#00009c"></div><svg class="a" style="left:11px;top:137px" width="24" height="15" viewBox="0 0 24 15"><path d="M1 7.500C5 1 19 1 23 7.500C19 14 5 14 1 7.500Z" fill="#fff"/><path d="M3 7.500C7 3.500 17 3.500 21 7.500C17 11.500 7 11.500 3 7.500Z" fill="#00009c"/><ellipse cx="12" cy="7.500" rx="7" ry="3.600" fill="#fff"/><circle cx="12" cy="7.500" r="3.300" fill="#00009c"/><circle cx="12" cy="7.500" r="1.300" fill="#fff"/></svg><div class="a" style="left:64px;top:127px;width:27px;height:36px;overflow:hidden;border:1px solid #fff;"><svg class="a" width="25" height="34" viewBox="0 0 248 350" preserveAspectRatio="none" style="left:0;top:0"><defs>
<filter id="t2b" x="-5%" y="-5%" width="110%" height="110%"><feGaussianBlur stdDeviation="0.6"/></filter>
<filter id="t2b3" x="-30%" y="-30%" width="160%" height="160%"><feGaussianBlur stdDeviation="4"/></filter>
<linearGradient id="t2w" x1="0" x2="1"><stop offset="0" stop-color="#cdc9c1"/><stop offset=".3" stop-color="#d6d2ca"/><stop offset=".8" stop-color="#dcd9d3"/><stop offset="1" stop-color="#e2dfda"/></linearGradient>
<linearGradient id="t2d" x1="0" x2="1"><stop offset="0" stop-color="#7a3a1c"/><stop offset=".1" stop-color="#682e16"/><stop offset=".2" stop-color="#7a3c20"/><stop offset=".215" stop-color="#b08a5c"/><stop offset=".235" stop-color="#7c4a26"/><stop offset=".44" stop-color="#80502a"/><stop offset=".46" stop-color="#683c20"/><stop offset="1" stop-color="#744826"/></linearGradient>
<linearGradient id="t2s" x1="0" y1="0" x2="1" y2="1"><stop offset="0" stop-color="#4c5d70"/><stop offset=".5" stop-color="#435365"/><stop offset="1" stop-color="#374553"/></linearGradient>
<linearGradient id="t2l" x1="0" x2="1"><stop offset="0" stop-color="#b87c4c"/><stop offset=".4" stop-color="#dca272"/><stop offset="1" stop-color="#c88c5c"/></linearGradient>
<radialGradient id="t2f" cx="42%" cy="45%" r="62%"><stop offset="0" stop-color="#e8bca4"/><stop offset=".65" stop-color="#d29c80"/><stop offset="1" stop-color="#a66c52"/></radialGradient>
<pattern id="t2k" width="5" height="5" patternUnits="userSpaceOnUse" patternTransform="rotate(25)"><rect x=".5" y=".5" width="2" height="2" fill="#222e3a" opacity=".6"/><rect x="3" y="3" width="1.6" height="1.6" fill="#8494a4" opacity=".5"/></pattern>
<pattern id="t2k2" width="22" height="18" patternUnits="userSpaceOnUse" patternTransform="rotate(-20)"><ellipse cx="6" cy="5" rx="4" ry="3" fill="#8e99a6"/><ellipse cx="17" cy="14" rx="4" ry="3" fill="#8e99a6"/></pattern>
<pattern id="t2kk" width="46" height="40" patternUnits="userSpaceOnUse" patternTransform="rotate(-20)"><ellipse cx="12" cy="10" rx="9" ry="6.500" fill="url(#t2k)"/><ellipse cx="35" cy="30" rx="9" ry="6.500" fill="url(#t2k)"/></pattern>
</defs><g filter="url(#t2b)"><rect x="-4" y="-4" width="256" height="358" fill="url(#t2w)"/><g fill="#c6c1b6" opacity=".45" filter="url(#t2b3)"><ellipse cx="28" cy="50" rx="9" ry="20"/><ellipse cx="52" cy="140" rx="8" ry="22"/><ellipse cx="228" cy="60" rx="5" ry="22"/><ellipse cx="14" cy="180" rx="7" ry="18"/><ellipse cx="60" cy="30" rx="6" ry="10"/></g><rect x="82" y="-4" width="123" height="210" fill="#c8a060"/><rect x="91" y="-4" width="100" height="210" fill="url(#t2d)"/><rect x="137" y="-4" width="54" height="26" fill="#866034"/><rect x="138" y="21" width="53" height="7" fill="#583014"/><rect x="138" y="28" width="53" height="90" fill="#704422"/><rect x="79.500" y="-4" width="2.500" height="108" fill="#efebe4"/><g stroke="#6a3218" stroke-width="1" opacity=".5"><path d="M96 0V100M102 0V100M108 0V100"/></g><path d="M160 178L197 176L202 212L172 252L140 270Z" fill="#7c4a28"/><path d="M196 177L215 175L207 201L197 202Z" fill="#e4dcd2"/><path d="M-2 286L40 284L62 354L-2 354Z" fill="#5e3619"/><path d="M86 105C100 99 114 93 128 86L136 80L150 100L162 118L120 118Z" fill="#cf9c80"/><path d="M124 92C128 100 132 108 138 114" stroke="#b98568" stroke-width="1.500" fill="none"/><path d="M250 156L228 160C224 166 220 172 214 180C212 188 210 194 207 200C192 214 174 230 160 244L120 260L100 300L96 354L252 354Z" fill="#0c0d12"/><path d="M150 310C180 296 215 292 250 300" stroke="#1e2029" stroke-width="4" fill="none"/><path d="M24 272L118 272L121 313L97 354L43 354L27 310Z" fill="#cc9060"/><path d="M80 282C94 288 108 300 120 313C112 326 104 340 97 354L84 354Z" fill="#c88a5a"/><path d="M20 287C28 278 34 274 41 273C52 271 62 272 68 273C74 275 78 279 82 283C86 296 90 310 91 320C94 332 96 344 97 354L43 354C38 340 32 324 27 310Z" fill="url(#t2l)"/><ellipse cx="75" cy="340" rx="9" ry="12" fill="#f6dcc6" opacity=".85" filter="url(#t2b3)"/><path d="M82 284C86 300 90 318 93 350" stroke="#9c6238" stroke-width="1.800" fill="none" opacity=".7"/><path d="M-2 288L11 289C14 305 12 325 13 346L3 348L-2 340Z" fill="#c99878"/><path d="M64 107C74 103 84 102 91 104C104 110 116 113 128 114C140 116 150 116 160 116C168 116 174 115 180 114C192 110 204 108 214 109C224 112 232 113 237 112C242 110 246 107 250 104L250 157L228 160C224 166 220 172 214 176C204 178 192 180 180 181C176 195 166 215 158 232C152 252 146 270 140 284C134 296 128 306 121 313C112 304 102 294 91 285C84 280 76 275 68 273C58 271 46 271 38 273C30 278 24 283 18 286L-2 287L-2 268C0 250 3 240 5 232C8 218 12 206 18 196C24 180 32 164 41 150C48 134 56 118 64 107Z" fill="url(#t2s)"/><g stroke="#33414f" stroke-width="5" fill="none" opacity=".35" filter="url(#t2b3)"><path d="M60 140C48 190 40 230 36 272"/><path d="M178 122C184 150 178 175 168 205"/><path d="M6 250C30 252 60 262 90 284"/></g><path d="M138 56C141 46 147 38 153 33C160 27 168 24 176 24C184 24 190 27 195 32C202 38 207 44 210 54C214 62 217 72 218 88C218 98 215 106 213 112C211 122 211 130 209 138C206 148 203 156 199 164C196 154 194 148 191 142C188 134 184 124 180 118L170 70Z" fill="#3a1a13"/><path d="M141 57C148 48 156 46 163 47C172 48 178 52 182 58C186 64 186 72 185 78C184 86 183 92 180 96C176 102 172 105 168 107C162 111 156 112 151 111C146 110 142 108 140 106C135 102 133 96 133 90C133 84 134 80 135 76C137 68 138 62 141 57Z" fill="url(#t2f)"/><ellipse cx="156" cy="68" rx="6" ry="3.500" fill="#7a5a58" opacity=".55" transform="rotate(25 156 68)"/><ellipse cx="175" cy="85" rx="6" ry="3.500" fill="#7a5a58" opacity=".55" transform="rotate(25 175 85)"/><ellipse cx="156" cy="68.500" rx="2.800" ry="1.900" fill="#2c2c38"/><ellipse cx="175" cy="85.500" rx="2.800" ry="1.900" fill="#2c2c38"/><path d="M137 60C140 46 150 34 164 29C176 26 190 30 198 40C204 50 206 62 204 80C200 68 194 60 186 56C182 54 178 54 174 56C168 60 160 60 154 58C148 56 142 56 137 60Z" fill="#3f1f18"/><path d="M182 54C188 66 190 90 184 112C182 118 182 120 180 120C190 116 200 96 200 70C198 60 192 54 182 54Z" fill="#3a1a13"/><path d="M200 44C210 62 214 100 205 140" stroke="#7c3c28" stroke-width="5" fill="none" opacity=".5"/><path d="M176 52C170 60 164 66 156 72M180 56C174 64 170 72 168 82M170 50C166 56 160 62 152 64" stroke="#2a120e" stroke-width="1.100" fill="none"/><path d="M144 94C148 97 153 98 158 97" stroke="#b05a5c" stroke-width="2.400" fill="none"/><path d="M164 76C162 82 159 86 162 89" stroke="#b88468" stroke-width="1.200" fill="none"/></g></svg></div><span class="t" style="left:101px;top:139px;font-size:12.5px;color:#fff">Фон</span><div class="sb" style="left:343px;top:123px;width:15px;height:151px"></div><svg class="a" style="left:345px;top:125px" width="11" height="11" viewBox="0 0 11 11"><path d="M5.500 .5L10.500 10.500H.5Z" fill="#d6d6d6"/><path d="M5.500 .5L.5 10.500" stroke="#fff"/><path d="M5.500 .5L10.500 10.500H.5" stroke="#000" fill="none"/></svg><div class="btn" style="left:345px;top:136px;width:11px;height:125px"></div><svg class="a" style="left:345px;top:261px" width="11" height="11" viewBox="0 0 11 11"><path d="M.5 .5H10.500L5.500 10.500Z" fill="#d6d6d6"/><path d="M10.500 .5H.5L5.500 10.500" stroke="#fff" fill="none"/><path d="M10.500 .5L5.500 10.500" stroke="#000"/></svg><div class="btn" style="left:6px;top:279px;width:57px;height:24px"></div><svg class="a" style="left:27px;top:284px" width="14" height="15" viewBox="0 0 14 15"><path d="M4.500 .5H10.500V12.500H.5V4.500Z" fill="#fff" stroke="#000"/><path d="M.5 4.500H4.500V.5" fill="none" stroke="#000"/></svg><div class="btn" style="left:63px;top:279px;width:58px;height:24px"></div><svg class="a" style="left:85px;top:284px" width="14" height="15" viewBox="0 0 14 15"><path d="M6 1L11.500 12.500H.5Z" fill="#d6d6d6" stroke="#8e8e8e"/><path d="M6 1L.5 12.500" stroke="#fff"/></svg><div class="btn" style="left:121px;top:279px;width:58px;height:24px"></div><svg class="a" style="left:143px;top:284px" width="14" height="15" viewBox="0 0 14 15"><path d="M.5 .5H11.500L6 12Z" fill="#d6d6d6" stroke="#8e8e8e"/><path d="M.5 .5H11.500" stroke="#fff"/></svg><div class="btn" style="left:179px;top:279px;width:58px;height:24px"></div><svg class="a" style="left:201px;top:284px" width="14" height="15" viewBox="0 0 14 15"><path d="M6.500 2.500H12.500V14.500H3.500V5.500Z" fill="#fff" stroke="#000"/><path d="M3.500 .5H9.500V11.500H.5V3.500Z" fill="#fff" stroke="#000"/></svg><div class="btn" style="left:237px;top:279px;width:58px;height:24px"></div><svg class="a" style="left:259px;top:284px" width="14" height="15" viewBox="0 0 14 15"><circle cx="6.500" cy="2.500" r="1.800" fill="none" stroke="#8e8e8e"/><path d="M6.500 4V14M3 6.500H10M1 9C1 13 4 14 6.500 14C9 14 12 13 12 9" fill="none" stroke="#8e8e8e" stroke-width="1.300"/><path d="M7.500 4V13" stroke="#fff" stroke-width=".8"/></svg><div class="btn" style="left:295px;top:279px;width:63px;height:24px"></div><svg class="a" style="left:319px;top:284px" width="14" height="15" viewBox="0 0 14 15"><path d="M1.500 3.500H11.500L10.500 14.500H2.500Z" fill="#ddd" stroke="#000"/><path d="M.5 3H12.500M4.500 1H8.500V3M4.500 5.500V12.500M6.500 5.500V12.500M8.500 5.500V12.500" stroke="#000" fill="none"/></svg><div class="btn" style="left:3px;top:314px;width:359px;height:22px"></div><span class="t" style="left:157px;top:320px;font-size:12.5px;">Закрыть</span></div><div class="rb" style="top:362px"></div></div>
<div class="win" style="left:565px;top:443px;width:224px;height:327px;z-index:0"><div class="tb"><i class="l"></i><i class="m"></i><i class="r"></i><svg style="left:6px;top:6px" width="10" height="10" viewBox="0 0 10 10"><rect x="0.600" y="0.600" width="8.800" height="8.800" fill="none" stroke="#000" stroke-width="1.200"/><rect x="0" y="0" width="10" height="3" fill="#000"/></svg><svg style="right:5px" width="12" height="11" viewBox="0 0 12 11"><path d="M1.5 1L10.5 10M10.5 1L1.5 10" stroke="#000" stroke-width="2.4"/></svg><b style="letter-spacing:0px">Выбор градиента</b></div><div class="ct" style="height:293px"><div class="in" style="left:2px;top:2px;width:200px;height:251px;background:#fff"></div><div class="a" style="left:4px;top:4px;width:196px;height:247px;overflow:hidden;background:#fff"><div class="a" style="left:4px;top:12px;width:48px;height:16px;border:1px solid #000;background:repeating-linear-gradient(90deg,#333 0,#eee 4px,#333 8px)"></div><span class="t" style="left:71px;top:14px;font-size:12px;color:#000;letter-spacing:.13px">Four_bars</span><div class="a" style="left:4px;top:31px;width:48px;height:16px;border:1px solid #000;background:linear-gradient(90deg,#0000ff 0,#0000ff 33%,#fff 33%,#fff 66%,#ff0000 66%)"></div><span class="t" style="left:71px;top:33px;font-size:12px;color:#000;letter-spacing:.13px">French_flag</span><div class="a" style="left:4px;top:50px;width:48px;height:16px;border:1px solid #000;background:linear-gradient(90deg,#2020ff 0,#8080ff 25%,#fff 50%,#ff8080 75%,#ff2020 100%)"></div><span class="t" style="left:71px;top:52px;font-size:12px;color:#000;letter-spacing:.13px">French_flag_smooth</span><div class="a" style="left:4px;top:69px;width:48px;height:16px;border:1px solid #000;background:linear-gradient(90deg,#ff0000,#ffff00 17%,#00ff00 33%,#00ffff 50%,#0000ff 67%,#ff00ff 83%,#ff0000)"></div><span class="t" style="left:71px;top:71px;font-size:12px;color:#000;letter-spacing:.13px">Full_saturation_spectr</span><div class="a" style="left:4px;top:88px;width:48px;height:16px;border:1px solid #000;background:linear-gradient(90deg,#ff0000,#ff00ff 17%,#0000ff 33%,#00ffff 50%,#00ff00 67%,#ffff00 83%,#ff0000)"></div><span class="t" style="left:71px;top:90px;font-size:12px;color:#000;letter-spacing:.13px">Full_saturation_spectr</span><div class="a" style="left:4px;top:107px;width:48px;height:16px;border:1px solid #000;background:linear-gradient(90deg,#000 0,#000 33%,#ff0000 33%,#ff0000 66%,#ffff00 66%)"></div><span class="t" style="left:71px;top:109px;font-size:12px;color:#000;letter-spacing:.13px">German_flag</span><div class="a" style="left:0;top:125px;width:196px;height:19px;background:#00009c"></div><div class="a" style="left:4px;top:126px;width:48px;height:16px;border:1px solid #000;background:linear-gradient(90deg,#000 0,#700000 25%,#ff0000 50%,#ff9000 75%,#ffff00 100%)"></div><span class="t" style="left:71px;top:128px;font-size:12px;color:#fff;letter-spacing:.13px">German_flag_smooth</span><div class="a" style="left:4px;top:145px;width:48px;height:16px;border:1px solid #000;background:linear-gradient(90deg,#5e4c0c 0,#c4ac30 22%,#e8d860 45%,#9a8420 62%,#d8c448 80%,#6e5a10 100%)"></div><span class="t" style="left:71px;top:147px;font-size:12px;color:#000;letter-spacing:.13px">Golden</span><div class="a" style="left:4px;top:164px;width:48px;height:16px;border:1px solid #000;background:linear-gradient(90deg,#3c6428 0,#5a8a3c 22%,#38442c 52%,#5c9040 76%,#345a2a 100%)"></div><span class="t" style="left:71px;top:166px;font-size:12px;color:#000;letter-spacing:.13px">Greens</span><div class="a" style="left:4px;top:183px;width:48px;height:16px;border:1px solid #000;background:linear-gradient(90deg,#2a6cae 0,#7ab0dc 35%,#f4f8fc 54%,#e8a868 56%,#c88040 75%,#70401c 100%)"></div><span class="t" style="left:71px;top:185px;font-size:12px;color:#000;letter-spacing:.13px">Horizon_1</span><div class="a" style="left:4px;top:202px;width:48px;height:16px;border:1px solid #000;background:linear-gradient(90deg,#2a74b4 0,#5a9cd0 35%,#f4f8fc 54%,#7cc0e8 57%,#3a78b0 78%,#18305c 100%)"></div><span class="t" style="left:71px;top:204px;font-size:12px;color:#000;letter-spacing:.13px">Horizon_2</span><div class="a" style="left:4px;top:221px;width:48px;height:16px;border:1px solid #000;background:linear-gradient(90deg,#000 0,#400000 25%,#980800 50%,#e03000 68%,#ff9010 82%,#ffe840 95%,#ffff70 100%)"></div><span class="t" style="left:71px;top:223px;font-size:12px;color:#000;letter-spacing:.13px">Incandescent</span><div class="a" style="left:4px;top:240px;width:48px;height:16px;border:1px solid #000;background:linear-gradient(90deg,#2a6cae 0,#7ab0dc 35%,#f4f8fc 54%,#2e7a3a 57%,#2a6a30 80%,#1c4a20 100%)"></div><span class="t" style="left:71px;top:242px;font-size:12px;color:#000;letter-spacing:.13px">Land_1</span></div><div class="btn" style="left:4px;top:4px;width:66px;height:22px"></div><span class="t" style="left:8px;top:9px;font-size:12.5px;">Градиент</span><div class="btn" style="left:70px;top:4px;width:130px;height:22px"></div><span class="t" style="left:75px;top:9px;font-size:12.5px;">Название</span><div class="sb" style="left:205px;top:2px;width:15px;height:251px"></div><svg class="a" style="left:207px;top:4px" width="11" height="11" viewBox="0 0 11 11"><path d="M5.500 .5L10.500 10.500H.5Z" fill="#d6d6d6"/><path d="M5.500 .5L.5 10.500" stroke="#fff"/><path d="M5.500 .5L10.500 10.500H.5" stroke="#000" fill="none"/></svg><div class="btn" style="left:207px;top:110px;width:11px;height:32px"></div><svg class="a" style="left:207px;top:240px" width="11" height="11" viewBox="0 0 11 11"><path d="M.5 .5H10.500L5.500 10.500Z" fill="#d6d6d6"/><path d="M10.500 .5H.5L5.500 10.500" stroke="#fff" fill="none"/><path d="M10.500 .5L5.500 10.500" stroke="#000"/></svg><div class="btn " style="left:52px;top:264px;width:78px;height:22px;padding-top:4px;font-size:12.5px">Правка</div><div class="a" style="left:135px;top:259px;width:85px;height:32px;border:1px solid;border-color:#000 #fff #fff #000;box-shadow:inset 1px 1px 0 #8e8e8e"></div><div class="btn " style="left:141px;top:264px;width:74px;height:22px;padding-top:4px;font-size:12.5px">Закрыть</div></div><div class="rb" style="top:317px"></div></div>
<div class="win" style="left:797px;top:476px;width:219px;height:294px;z-index:0"><div class="tb"><i class="l"></i><i class="m"></i><i class="r"></i><svg style="left:6px;top:6px" width="10" height="10" viewBox="0 0 10 10"><rect x="0.600" y="0.600" width="8.800" height="8.800" fill="none" stroke="#000" stroke-width="1.200"/><rect x="0" y="0" width="10" height="3" fill="#000"/></svg><svg style="right:5px" width="12" height="11" viewBox="0 0 12 11"><path d="M1.5 1L10.5 10M10.5 1L1.5 10" stroke="#000" stroke-width="2.4"/></svg><b style="letter-spacing:0px">Выбор шаблона</b></div><div class="ct" style="height:260px"><span class="t" style="left:7px;top:6px;font-size:12px;letter-spacing:.2px">Pine?&nbsp; (100 X 100)</span><div class="in" style="left:2px;top:22px;width:197px;height:197px;background:#fff"></div><div class="a" style="left:5px;top:25px;width:30px;height:30px;background:radial-gradient(ellipse at 75% 65%,#b4cc58 0,transparent 40%),radial-gradient(ellipse at 25% 80%,#9ab840 0,transparent 35%),radial-gradient(ellipse at 30% 20%,#3a5a18 0,transparent 40%),linear-gradient(135deg,#55781f,#8aa838 60%,#6a8a28);"></div><div class="a" style="left:37px;top:25px;width:30px;height:30px;background:radial-gradient(ellipse at 30% 75%,#5a2008 0,transparent 40%),radial-gradient(ellipse at 70% 30%,#e8a070 0,transparent 35%),radial-gradient(ellipse at 20% 20%,#d87840 0,transparent 40%),linear-gradient(160deg,#c86a38,#8a3a18);"></div><div class="a" style="left:69px;top:25px;width:30px;height:30px;background:radial-gradient(ellipse at 30% 30%,#0a5a0a 0,transparent 40%),radial-gradient(ellipse at 70% 40%,#48c048 0,transparent 40%),radial-gradient(ellipse at 40% 85%,#30b030 0,transparent 40%),linear-gradient(135deg,#1a7a1a,#2a9a2a);"></div><div class="a" style="left:101px;top:25px;width:30px;height:30px;background:radial-gradient(ellipse at 25% 45%,#7a5030 0,#7a5030 8%,#0a0606 10%,#0a0606 24%,transparent 26%),radial-gradient(ellipse at 80% 20%,#0a0606 0,#0a0606 16%,transparent 18%),radial-gradient(ellipse at 75% 75%,#0a0606 0,#0a0606 20%,transparent 22%),radial-gradient(ellipse at 20% 95%,#0a0606 0,#0a0606 14%,transparent 16%),#c8a078;"></div><div class="a" style="left:133px;top:25px;width:30px;height:30px;background:linear-gradient(115deg,transparent 60%,#6a50a8 72%,transparent 80%),linear-gradient(135deg,#4a2a88,#2a1058 70%,#301868);"></div><div class="a" style="left:165px;top:25px;width:30px;height:30px;background:radial-gradient(ellipse at 85% 70%,#7a2030 0,transparent 45%),radial-gradient(ellipse at 15% 15%,#5a1020 0,transparent 35%),#1c0408;"></div><div class="a" style="left:5px;top:57px;width:30px;height:30px;background:radial-gradient(ellipse at 55% 28%,#a050c0 0,#a050c0 9%,transparent 11%),radial-gradient(ellipse at 50% 90%,#a050c0 0,#a050c0 9%,transparent 11%),linear-gradient(60deg,transparent 45%,#60a860 47%,#60a860 50%,transparent 52%),#ead49a;"></div><div class="a" style="left:37px;top:57px;width:30px;height:30px;background:radial-gradient(ellipse at 30% 40%,#2a6010 0,transparent 40%),radial-gradient(ellipse at 70% 70%,#58a838 0,transparent 40%),linear-gradient(135deg,#3a8a20,#4a9a2a);"></div><div class="a" style="left:69px;top:57px;width:30px;height:30px;background:radial-gradient(ellipse at 30% 60%,#dcdcdc 0,transparent 40%),radial-gradient(ellipse at 70% 30%,#e4e4e4 0,transparent 35%),#f2f2f2;"></div><div class="a" style="left:101px;top:57px;width:30px;height:30px;background:linear-gradient(120deg,transparent 40%,#b8b8bc 45%,transparent 52%),radial-gradient(ellipse at 30% 30%,#c8c8cc 0,transparent 40%),#e6e6ea;"></div><div class="a" style="left:133px;top:57px;width:30px;height:30px;background:linear-gradient(40deg,transparent 45%,#c8c4bc 50%,transparent 56%),radial-gradient(ellipse at 60% 30%,#f4f2ee 0,transparent 40%),#e4e0d8;"></div><div class="a" style="left:165px;top:57px;width:30px;height:30px;background:linear-gradient(160deg,transparent 55%,#c8c8cc 62%,#8a8a90 70%,transparent 78%),radial-gradient(ellipse at 40% 20%,#c07870 0,transparent 50%),linear-gradient(180deg,#4a3a48,#2a2a30 60%,#1a1a20);"></div><div class="a" style="left:5px;top:89px;width:30px;height:30px;background:repeating-linear-gradient(45deg,#140806 0,#140806 5px,#7a3a38 6px,#f0d0d0 7px,#7a3a38 8px,#140806 9px);"></div><div class="a" style="left:37px;top:89px;width:30px;height:30px;background:radial-gradient(ellipse at 25% 30%,#111 0,transparent 30%),radial-gradient(ellipse at 70% 60%,#eee 0,transparent 30%),radial-gradient(ellipse at 40% 80%,#222 0,transparent 30%),radial-gradient(ellipse at 75% 20%,#ddd 0,transparent 25%),#808080;"></div><div class="a" style="left:69px;top:89px;width:30px;height:30px;background:radial-gradient(ellipse at 30% 25%,#ddd 0,transparent 30%),radial-gradient(ellipse at 65% 55%,#111 0,transparent 30%),radial-gradient(ellipse at 25% 75%,#222 0,transparent 25%),radial-gradient(ellipse at 80% 85%,#ddd 0,transparent 25%),#8a8a8a;"></div><div class="a" style="left:101px;top:89px;width:30px;height:30px;background:linear-gradient(115deg,transparent 55%,#6a7a50 58%,#8a9a70 75%,#d0d0a8 78%),radial-gradient(ellipse at 30% 85%,#7a8a60 0,transparent 30%),#d0d0a8;"></div><div class="a" style="left:133px;top:89px;width:30px;height:30px;background:radial-gradient(ellipse at 60% 30%,#1a1410 0,transparent 35%),radial-gradient(ellipse at 20% 60%,#c8a060 0,transparent 25%),radial-gradient(ellipse at 75% 85%,#b08848 0,transparent 25%),#5a4028;"></div><div class="a" style="left:165px;top:89px;width:30px;height:30px;background:radial-gradient(ellipse at 60% 30%,#4a88a8 0,transparent 40%),radial-gradient(ellipse at 30% 75%,#1a4a6a 0,transparent 40%),#2e6686;"></div><div class="a" style="left:5px;top:121px;width:30px;height:30px;background:linear-gradient(180deg,#fff 0,#fff 25%,transparent 25%,transparent 78%,#fff 78%),repeating-linear-gradient(90deg,#2030b0 0,#7020a0 2px,#2040c0 4px,#208a40 6px,#b02030 7px,#2030b0 9px);"></div><div class="a" style="left:37px;top:121px;width:30px;height:30px;background:radial-gradient(ellipse at 60% 50%,#c02838 0,transparent 22%),radial-gradient(ellipse at 25% 25%,#1a8a9a 0,transparent 25%),radial-gradient(ellipse at 30% 80%,#30a050 0,transparent 18%),radial-gradient(ellipse at 80% 20%,#7a2080 0,transparent 25%),#16244c;"></div><div class="a" style="left:69px;top:121px;width:30px;height:30px;background:radial-gradient(ellipse 70% 60% at 0% 0%,transparent 0,transparent 93%,#e8b030 95%,#c04a20 99%,transparent 101%),#2c5ca4;"></div><div class="a" style="left:101px;top:121px;width:30px;height:30px;background:radial-gradient(ellipse at 20% 55%,#080808 0,#222 25%,transparent 45%),radial-gradient(ellipse at 75% 30%,#111 0,transparent 30%),radial-gradient(ellipse at 60% 85%,#fff 0,transparent 40%),#d8d8d8;"></div><div class="a" style="left:133px;top:121px;width:30px;height:30px;background:radial-gradient(ellipse at 70% 25%,#181818 0,transparent 40%),radial-gradient(ellipse at 30% 70%,#9a9a9a 0,transparent 40%),#585858;"></div><div class="a" style="left:165px;top:121px;width:30px;height:30px;background:radial-gradient(ellipse at 60% 50%,#7a3418 0,transparent 40%),radial-gradient(ellipse at 20% 20%,#2a3a10 0,transparent 40%),#38240c;"></div><div class="a" style="left:5px;top:153px;width:30px;height:30px;background:radial-gradient(ellipse at 60% 25%,#fce090 0,transparent 30%),radial-gradient(ellipse at 25% 70%,#f8c850 0,transparent 30%),radial-gradient(ellipse at 80% 80%,#e88a10 0,transparent 30%),#f2a224;"></div><div class="a" style="left:37px;top:153px;width:30px;height:30px;background:repeating-linear-gradient(60deg,transparent 0,transparent 2px,rgba(255,255,255,.25) 3px),repeating-linear-gradient(-50deg,transparent 0,transparent 2px,rgba(0,0,0,.18) 3px),#a2a2a2;"></div><div class="a" style="left:69px;top:153px;width:30px;height:30px;background:repeating-linear-gradient(90deg,#b85a20 0,#d88848 3px,#a84a18 7px,#c86a28 10px);"></div><div class="a" style="left:101px;top:153px;width:30px;height:30px;background:linear-gradient(90deg,transparent 45%,rgba(90,40,10,.35) 48%,transparent 52%),linear-gradient(180deg,transparent 30%,rgba(90,40,10,.3) 33%,transparent 37%),#b8682a;"></div><div class="a" style="left:133px;top:153px;width:30px;height:30px;background:repeating-linear-gradient(90deg,transparent 0,transparent 4px,rgba(40,10,5,.55) 5px,rgba(40,10,5,.55) 6px),linear-gradient(180deg,#7a3418 0,#c07840 35%,#5a2010 36%,#a86030 70%,#6a2a12 71%,#b87038 100%);"></div><div class="a" style="left:165px;top:153px;width:30px;height:30px;background:radial-gradient(circle at 68% 22%,#4a60c0 0,#3a50a8 10%,#7ac020 22%,#4a58b0 30%,transparent 40%),linear-gradient(200deg,#7ac020 50%,#4a70b0 75%,#90d030 90%);"></div><div class="a" style="left:5px;top:185px;width:30px;height:30px;background:radial-gradient(ellipse at 70% 80%,#50b060 0,transparent 35%),radial-gradient(ellipse at 30% 55%,#4878c0 0,transparent 40%),radial-gradient(ellipse at 60% 15%,#9a58a8 0,transparent 40%),#5a80a0;"></div><div class="a" style="left:37px;top:185px;width:30px;height:30px;background:radial-gradient(ellipse at 50% 50%,#6a4030 0,#6a4030 28%,#2a1610 32%) 0 0/11px 9px;"></div><div class="a" style="left:69px;top:185px;width:30px;height:30px;background:repeating-linear-gradient(90deg,#f2aa48 0,#f8be66 2px,#eca040 4px,#f6b658 7px);"></div><div class="a" style="left:101px;top:185px;width:30px;height:30px;background:repeating-linear-gradient(90deg,#f2aa48 0,#f8be66 2px,#eca040 4px,#f6b658 7px);border:1.500px solid #000;"></div><div class="a" style="left:133px;top:185px;width:30px;height:30px;background:linear-gradient(60deg,transparent 40%,#e0c0b8 48%,transparent 56%),#f2e0dc;"></div><div class="a" style="left:165px;top:185px;width:30px;height:30px;background:linear-gradient(150deg,#fff 0,#fff 18%,#0a0a0a 26%,#0a0a0a 38%,#fff 46%,#fff 58%,#0a0a0a 66%,#0a0a0a 76%,#fff 84%);"></div><div class="sb" style="left:200px;top:22px;width:15px;height:197px"></div><svg class="a" style="left:202px;top:24px" width="11" height="11" viewBox="0 0 11 11"><path d="M5.500 .5L10.500 10.500H.5Z" fill="#d6d6d6"/><path d="M5.500 .5L.5 10.500" stroke="#fff"/><path d="M5.500 .5L10.500 10.500H.5" stroke="#000" fill="none"/></svg><div class="btn" style="left:202px;top:120px;width:11px;height:36px"></div><svg class="a" style="left:202px;top:206px" width="11" height="11" viewBox="0 0 11 11"><path d="M.5 .5H10.500L5.500 10.500Z" fill="#d6d6d6"/><path d="M10.500 .5H.5L5.500 10.500" stroke="#fff" fill="none"/><path d="M10.500 .5L5.500 10.500" stroke="#000"/></svg><div class="a" style="left:0;top:221px;width:217px;height:2px;border-top:1px solid #8e8e8e;border-bottom:1px solid #fff"></div><div class="btn " style="left:41px;top:230px;width:77px;height:22px;padding-top:4px;font-size:12.5px">Обновить</div><div class="a" style="left:128px;top:225px;width:87px;height:32px;border:1px solid;border-color:#000 #fff #fff #000;box-shadow:inset 1px 1px 0 #8e8e8e"></div><div class="btn " style="left:134px;top:230px;width:76px;height:22px;padding-top:4px;font-size:12.5px">Закрыть</div></div><div class="rb" style="top:284px"></div></div>
</body></html>
